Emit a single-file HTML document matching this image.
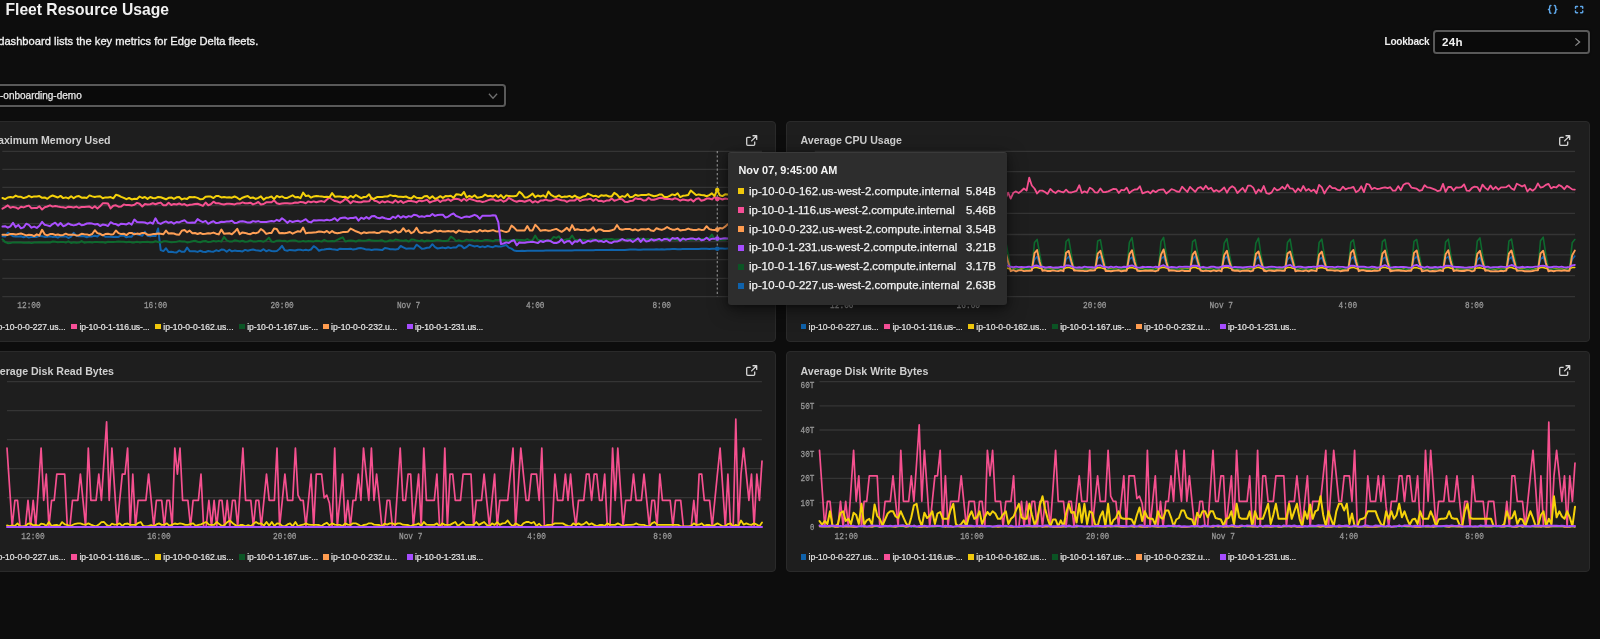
<!DOCTYPE html>
<html lang="en"><head><meta charset="utf-8"><title>Fleet Resource Usage</title>
<style>
html,body{margin:0;padding:0;background:#0d0d0d;}
body{width:1600px;height:639px;overflow:hidden;position:relative;font-family:"Liberation Sans",sans-serif;color:#fff;}
.abs{position:absolute;white-space:nowrap;}
.panel{position:absolute;background:#1e1e1e;border:1px solid #2a2a2a;border-radius:4px;box-sizing:border-box;}
.pt{position:absolute;white-space:nowrap;font-weight:bold;font-size:10.6px;color:#cfcfcf;line-height:12px;}
svg.main{position:absolute;left:0;top:0;}
.ax{font-family:"Liberation Mono",monospace;font-size:9.7px;fill:#989898;stroke:#989898;stroke-width:0.3px;}
.lg{position:absolute;height:10px;}
.li{-webkit-text-stroke:0.2px #e4e4e4;position:absolute;top:0;white-space:nowrap;font-size:8.6px;line-height:10px;color:#e4e4e4;padding-left:8px;}
.li i{position:absolute;left:0;top:2.3px;width:5.5px;height:5.5px;}
.ext{position:absolute;}
.sel{position:absolute;box-sizing:border-box;border:2px solid #595959;border-radius:3.5px;background:#0a0a0a;box-shadow:0 0 2px #060606;}
.tip{position:absolute;left:727.5px;top:151.5px;width:279.5px;height:153.5px;background:#2d2d2d;border-radius:3px;box-shadow:0 5px 18px rgba(0,0,0,.5),0 1px 5px rgba(0,0,0,.35);border-top:1px solid #3a3a3a;box-sizing:border-box;}
.tr{-webkit-text-stroke:0.25px #f2f2f2;position:absolute;left:10.5px;right:11px;height:14px;font-size:11.4px;letter-spacing:0.06px;line-height:14px;color:#f2f2f2;white-space:nowrap;}
.tr i{position:absolute;left:0;top:4.6px;width:6px;height:6px;}
.tn{position:absolute;left:11px;}
.tv{position:absolute;right:0;}
</style></head><body>
<div id="root" style="position:absolute;left:0;top:0;width:1600px;height:639px;overflow:hidden;will-change:transform;">
<div class="abs" style="left:5.5px;top:0px;font-size:15.65px;line-height:19px;font-weight:bold;color:#f1f1f1;">Fleet Resource Usage</div>
<div class="abs" style="left:-1.8px;top:33.5px;font-size:11.15px;line-height:14px;color:#f2f2f2;-webkit-text-stroke:0.3px #f2f2f2;">dashboard lists the key metrics for Edge Delta fleets.</div>
<svg class="abs" style="left:1540px;top:0px" width="50" height="20" viewBox="1540 0 50 20" fill="none" stroke="#5ea6e8" stroke-width="1.5" stroke-linecap="round" stroke-linejoin="round"><path d="M1550.9 5.6C1549.5 5.6 1549.7 6.8 1549.7 7.7S1549.2 9.4 1548.5 9.4C1549.2 9.4 1549.7 10.2 1549.7 11.1S1549.5 13.2 1550.9 13.2"/><path d="M1554.4 5.6C1555.8 5.6 1555.6 6.8 1555.6 7.7S1556.1 9.4 1556.8 9.4C1556.1 9.4 1555.6 10.2 1555.6 11.1S1555.8 13.2 1554.4 13.2"/><path d="M1575.5 8.2V7.2Q1575.5 6.6 1576.1 6.6H1577.5M1580.7 6.6H1582.1Q1582.7 6.6 1582.7 7.2V8.2M1582.7 11.1V12.1Q1582.7 12.7 1582.1 12.7H1580.7M1577.5 12.7H1576.1Q1575.5 12.7 1575.5 12.1V11.1"/></svg>
<div class="abs" style="left:1384.5px;top:36px;font-size:10.1px;line-height:12px;font-weight:bold;letter-spacing:-0.28px;color:#efefef;">Lookback</div>
<div class="sel" style="left:1433px;top:30px;width:157.2px;height:23.6px;"></div>
<div class="abs" style="left:1442px;top:34.7px;font-size:11.6px;line-height:13px;font-weight:bold;letter-spacing:0.3px;color:#efefef;">24h</div>
<svg class="abs" style="left:1574px;top:37px" width="8" height="10" viewBox="0 0 8 10" fill="none" stroke="#8c8c8c" stroke-width="1.25"><path d="M1.4 1.4L5.6 5.0L1.4 8.6"/></svg>
<div class="sel" style="left:-10px;top:84px;width:516px;height:23px;"></div>
<div class="abs" style="left:0px;top:89.5px;font-size:10px;line-height:12px;color:#e8e8e8;-webkit-text-stroke:0.25px #e8e8e8;">-onboarding-demo</div>
<svg class="abs" style="left:487px;top:92px" width="12" height="8" viewBox="0 0 12 8" fill="none" stroke="#707070" stroke-width="1.3"><path d="M1.9 1.8L6.0 6.2L10.1 1.8"/></svg>

<div class="panel" style="left:-27px;top:121px;width:803.1px;height:220.6px;"></div>
<div class="panel" style="left:785.9px;top:121px;width:804.3px;height:220.6px;"></div>
<div class="panel" style="left:-27px;top:351.4px;width:803.1px;height:220.6px;"></div>
<div class="panel" style="left:785.9px;top:351.4px;width:804.3px;height:220.6px;"></div>
<div class="pt" style="right:1489.5px;top:134px;">Maximum Memory Used</div>
<div class="pt" style="left:800.5px;top:134px;">Average CPU Usage</div>
<div class="pt" style="right:1486px;top:364.5px;">Average Disk Read Bytes</div>
<div class="pt" style="left:800.5px;top:364.5px;">Average Disk Write Bytes</div>
<svg class="ext" style="left:745.6px;top:134.6px" width="12" height="12" viewBox="0 0 12 12" fill="none" stroke="#d6d6d6" stroke-width="1.3" stroke-linejoin="round"><path d="M8.7 6.4v2.9a1 1 0 0 1-1 1H1.7a1 1 0 0 1-1-1V3.3a1 1 0 0 1 1-1h3"/><path d="M7 0.75h3.7v3.7M10.5 0.95L5.6 5.9" stroke-linecap="round"/></svg><svg class="ext" style="left:1558.6px;top:134.6px" width="12" height="12" viewBox="0 0 12 12" fill="none" stroke="#d6d6d6" stroke-width="1.3" stroke-linejoin="round"><path d="M8.7 6.4v2.9a1 1 0 0 1-1 1H1.7a1 1 0 0 1-1-1V3.3a1 1 0 0 1 1-1h3"/><path d="M7 0.75h3.7v3.7M10.5 0.95L5.6 5.9" stroke-linecap="round"/></svg><svg class="ext" style="left:745.6px;top:365.1px" width="12" height="12" viewBox="0 0 12 12" fill="none" stroke="#d6d6d6" stroke-width="1.3" stroke-linejoin="round"><path d="M8.7 6.4v2.9a1 1 0 0 1-1 1H1.7a1 1 0 0 1-1-1V3.3a1 1 0 0 1 1-1h3"/><path d="M7 0.75h3.7v3.7M10.5 0.95L5.6 5.9" stroke-linecap="round"/></svg><svg class="ext" style="left:1558.6px;top:365.1px" width="12" height="12" viewBox="0 0 12 12" fill="none" stroke="#d6d6d6" stroke-width="1.3" stroke-linejoin="round"><path d="M8.7 6.4v2.9a1 1 0 0 1-1 1H1.7a1 1 0 0 1-1-1V3.3a1 1 0 0 1 1-1h3"/><path d="M7 0.75h3.7v3.7M10.5 0.95L5.6 5.9" stroke-linecap="round"/></svg>
<svg class="main" width="1600" height="639" viewBox="0 0 1600 639"><line x1="2.3" x2="761.9" y1="151.4" y2="151.4" stroke="#353535" stroke-width="1.3"/><line x1="2.3" x2="761.9" y1="169.4" y2="169.4" stroke="#353535" stroke-width="1.3"/><line x1="2.3" x2="761.9" y1="187.4" y2="187.4" stroke="#353535" stroke-width="1.3"/><line x1="2.3" x2="761.9" y1="205.5" y2="205.5" stroke="#353535" stroke-width="1.3"/><line x1="2.3" x2="761.9" y1="223.6" y2="223.6" stroke="#353535" stroke-width="1.3"/><line x1="2.3" x2="761.9" y1="241.6" y2="241.6" stroke="#353535" stroke-width="1.3"/><line x1="2.3" x2="761.9" y1="259.7" y2="259.7" stroke="#353535" stroke-width="1.3"/><line x1="2.3" x2="761.9" y1="278.3" y2="278.3" stroke="#353535" stroke-width="1.3"/><line x1="2.3" x2="761.9" y1="296.7" y2="296.7" stroke="#353535" stroke-width="1.3"/>
<polyline points="2.5,236.2 5.1,236.6 7.8,232.7 10.4,234.4 13.0,236.2 15.7,236.5 18.3,236.6 21.0,236.2 23.6,237.2 26.2,236.3 28.9,237.6 31.5,236.9 34.1,236.9 36.8,236.9 39.4,235.9 42.1,236.3 44.7,236.9 47.3,236.8 50.0,236.3 52.6,236.9 55.2,236.5 57.9,237.7 60.5,236.2 63.2,236.5 65.8,236.4 68.4,238.0 71.1,236.7 73.7,232.9 76.3,235.7 79.0,236.2 81.6,236.1 84.3,236.2 86.9,237.2 89.5,236.4 92.2,236.4 94.8,235.8 97.4,236.5 100.1,234.1 102.7,234.9 105.3,236.7 108.0,236.8 110.6,236.8 113.3,237.0 115.9,236.7 118.5,236.9 121.2,235.4 123.8,235.7 126.4,237.3 129.1,236.6 131.7,236.7 134.4,233.1 137.0,234.3 139.6,235.1 142.3,235.7 144.9,231.7 147.5,235.7 150.2,236.4 152.8,235.7 155.5,236.1 158.1,228.5 160.7,250.1 163.4,251.1 166.0,248.3 168.6,252.1 171.3,251.7 173.9,252.2 176.6,252.6 179.2,250.4 181.8,251.8 184.5,251.7 187.1,247.6 189.7,251.2 192.4,251.3 195.0,251.3 197.6,251.9 200.3,250.7 202.9,251.7 205.6,252.0 208.2,251.0 210.8,251.5 213.5,251.7 216.1,250.3 218.7,251.1 221.4,249.6 224.0,249.7 226.7,251.8 229.3,249.7 231.9,251.3 234.6,250.6 237.2,251.1 239.8,251.0 242.5,251.4 245.1,249.9 247.8,250.7 250.4,250.0 253.0,249.5 255.7,250.2 258.3,250.5 260.9,250.9 263.6,249.2 266.2,251.2 268.9,250.1 271.5,251.0 274.1,251.3 276.8,251.0 279.4,249.0 282.0,245.8 284.7,250.1 287.3,250.7 289.9,249.9 292.6,250.2 295.2,250.5 297.9,249.7 300.5,249.8 303.1,250.4 305.8,249.7 308.4,250.4 311.0,249.5 313.7,246.2 316.3,247.9 319.0,250.8 321.6,249.8 324.2,249.6 326.9,249.0 329.5,248.7 332.1,249.3 334.8,249.6 337.4,250.0 340.1,248.7 342.7,249.1 345.3,249.0 348.0,249.0 350.6,248.7 353.2,249.6 355.9,249.0 358.5,248.2 361.2,248.1 363.8,248.8 366.4,249.6 369.1,249.6 371.7,249.9 374.3,249.5 377.0,249.6 379.6,249.8 382.2,250.1 384.9,248.0 387.5,248.4 390.2,249.3 392.8,249.2 395.4,249.4 398.1,249.0 400.7,246.0 403.3,247.3 406.0,248.7 408.6,248.4 411.3,248.5 413.9,248.7 416.5,244.7 419.2,246.5 421.8,248.7 424.4,248.4 427.1,247.8 429.7,247.4 432.4,244.2 435.0,247.1 437.6,248.5 440.3,248.0 442.9,247.6 445.5,248.2 448.2,247.3 450.8,248.1 453.5,247.4 456.1,247.6 458.7,245.3 461.4,245.7 464.0,248.3 466.6,247.0 469.3,244.7 471.9,245.6 474.6,246.5 477.2,245.9 479.8,247.2 482.5,246.4 485.1,247.2 487.7,246.0 490.4,246.8 493.0,247.2 495.6,245.9 498.3,246.5 500.9,246.6 503.6,245.9 506.2,245.0 508.8,247.6 511.5,248.6 514.1,250.5 516.7,250.9 519.4,250.9 522.0,250.8 524.7,250.9 527.3,250.8 529.9,250.8 532.6,250.8 535.2,250.8 537.8,250.8 540.5,250.8 543.1,250.7 545.8,250.6 548.4,250.6 551.0,250.6 553.7,250.5 556.3,250.4 558.9,250.5 561.6,250.6 564.2,250.4 566.9,250.4 569.5,250.4 572.1,250.4 574.8,250.3 577.4,250.2 580.0,250.2 582.7,250.2 585.3,250.2 587.9,250.3 590.6,250.2 593.2,250.2 595.9,250.0 598.5,249.9 601.1,250.1 603.8,250.1 606.4,250.0 609.0,250.0 611.7,249.8 614.3,249.9 617.0,250.0 619.6,249.9 622.2,249.9 624.9,249.9 627.5,249.7 630.1,249.6 632.8,249.6 635.4,249.6 638.1,249.7 640.7,249.7 643.3,249.6 646.0,249.6 648.6,249.6 651.2,249.5 653.9,249.4 656.5,249.3 659.2,249.4 661.8,249.3 664.4,249.4 667.1,249.3 669.7,249.2 672.3,249.1 675.0,249.1 677.6,249.2 680.2,249.2 682.9,249.0 685.5,249.0 688.2,249.0 690.8,249.0 693.4,249.0 696.1,248.9 698.7,248.9 701.3,248.8 704.0,248.8 706.6,248.8 709.3,248.9 711.9,248.8 714.5,248.8 717.2,248.7 719.8,248.6 722.4,248.6 725.1,248.7 727.7,248.6" fill="none" stroke="#1064ad" stroke-width="2.0" stroke-linejoin="round" stroke-linecap="round"/>
<polyline points="2.5,208.7 5.1,207.2 7.8,205.4 10.4,207.8 13.0,206.9 15.7,207.4 18.3,208.8 21.0,206.7 23.6,207.4 26.2,206.3 28.9,205.6 31.5,208.2 34.1,208.1 36.8,208.1 39.4,206.3 42.1,209.5 44.7,207.3 47.3,206.5 50.0,205.3 52.6,206.6 55.2,206.0 57.9,206.6 60.5,207.0 63.2,207.3 65.8,207.9 68.4,206.7 71.1,207.1 73.7,207.5 76.3,206.6 79.0,207.8 81.6,207.0 84.3,207.0 86.9,206.8 89.5,206.6 92.2,208.2 94.8,206.3 97.4,208.6 100.1,206.3 102.7,203.3 105.3,203.2 108.0,203.6 110.6,208.4 113.3,205.7 115.9,205.3 118.5,206.7 121.2,206.6 123.8,204.4 126.4,205.1 129.1,205.0 131.7,205.4 134.4,204.8 137.0,202.9 139.6,203.8 142.3,206.5 144.9,204.1 147.5,204.5 150.2,204.2 152.8,203.3 155.5,204.2 158.1,203.2 160.7,202.6 163.4,205.3 166.0,205.2 168.6,202.8 171.3,205.0 173.9,203.9 176.6,204.5 179.2,203.5 181.8,204.7 184.5,204.1 187.1,205.6 189.7,204.7 192.4,204.5 195.0,204.1 197.6,203.7 200.3,204.8 202.9,205.9 205.6,202.5 208.2,205.2 210.8,204.2 213.5,201.7 216.1,203.3 218.7,203.3 221.4,203.9 224.0,204.4 226.7,203.8 229.3,203.8 231.9,204.0 234.6,204.4 237.2,203.4 239.8,203.6 242.5,202.4 245.1,203.2 247.8,203.3 250.4,202.7 253.0,204.4 255.7,203.4 258.3,202.0 260.9,204.5 263.6,204.0 266.2,202.3 268.9,202.2 271.5,202.3 274.1,200.4 276.8,203.2 279.4,204.0 282.0,203.5 284.7,203.2 287.3,203.3 289.9,203.4 292.6,203.2 295.2,202.5 297.9,202.7 300.5,201.9 303.1,202.2 305.8,203.2 308.4,201.4 311.0,202.2 313.7,201.4 316.3,202.3 319.0,201.5 321.6,201.1 324.2,201.9 326.9,199.5 329.5,197.5 332.1,199.5 334.8,201.1 337.4,201.5 340.1,202.7 342.7,201.2 345.3,198.7 348.0,200.6 350.6,203.3 353.2,201.1 355.9,201.8 358.5,202.3 361.2,202.3 363.8,201.3 366.4,201.5 369.1,201.3 371.7,197.8 374.3,200.7 377.0,201.3 379.6,202.9 382.2,201.3 384.9,202.4 387.5,201.2 390.2,202.1 392.8,202.7 395.4,200.3 398.1,202.5 400.7,200.9 403.3,202.9 406.0,201.7 408.6,200.8 411.3,201.0 413.9,201.4 416.5,202.4 419.2,200.5 421.8,201.2 424.4,200.6 427.1,199.8 429.7,202.5 432.4,201.4 435.0,200.7 437.6,199.7 440.3,202.0 442.9,200.2 445.5,200.5 448.2,199.2 450.8,200.9 453.5,199.2 456.1,198.8 458.7,199.2 461.4,200.9 464.0,198.8 466.6,200.7 469.3,198.8 471.9,199.5 474.6,200.4 477.2,201.3 479.8,201.1 482.5,202.0 485.1,201.4 487.7,200.4 490.4,199.5 493.0,199.2 495.6,200.7 498.3,200.8 500.9,199.8 503.6,201.7 506.2,200.5 508.8,197.8 511.5,199.4 514.1,200.9 516.7,201.8 519.4,200.7 522.0,201.0 524.7,201.8 527.3,200.8 529.9,200.0 532.6,202.5 535.2,201.2 537.8,202.4 540.5,200.6 543.1,200.5 545.8,199.5 548.4,200.6 551.0,200.8 553.7,199.9 556.3,198.8 558.9,199.6 561.6,200.2 564.2,200.4 566.9,201.9 569.5,200.6 572.1,200.4 574.8,200.4 577.4,198.4 580.0,201.1 582.7,199.9 585.3,199.5 587.9,199.4 590.6,198.7 593.2,200.8 595.9,199.0 598.5,201.0 601.1,200.7 603.8,201.7 606.4,200.6 609.0,200.6 611.7,198.6 614.3,200.8 617.0,199.9 619.6,198.9 622.2,199.2 624.9,201.7 627.5,202.0 630.1,201.0 632.8,200.7 635.4,198.2 638.1,199.0 640.7,198.8 643.3,200.4 646.0,200.3 648.6,197.8 651.2,199.8 653.9,199.7 656.5,199.0 659.2,198.0 661.8,197.8 664.4,198.7 667.1,198.9 669.7,199.1 672.3,199.5 675.0,198.2 677.6,199.1 680.2,200.7 682.9,199.5 685.5,199.9 688.2,200.5 690.8,199.3 693.4,201.5 696.1,199.0 698.7,198.2 701.3,200.7 704.0,200.0 706.6,198.6 709.3,198.5 711.9,199.4 714.5,197.1 717.2,198.9 719.8,198.3 722.4,199.5 725.1,198.5 727.7,198.9" fill="none" stroke="#f5508f" stroke-width="2.0" stroke-linejoin="round" stroke-linecap="round"/>
<polyline points="2.5,198.0 5.1,199.1 7.8,197.5 10.4,197.0 13.0,197.5 15.7,195.6 18.3,196.8 21.0,196.8 23.6,198.1 26.2,197.3 28.9,195.8 31.5,197.2 34.1,196.4 36.8,196.6 39.4,196.1 42.1,197.8 44.7,197.4 47.3,198.8 50.0,196.7 52.6,195.5 55.2,196.5 57.9,197.5 60.5,195.9 63.2,198.1 65.8,197.4 68.4,198.4 71.1,196.2 73.7,198.2 76.3,196.5 79.0,196.1 81.6,197.7 84.3,197.4 86.9,197.9 89.5,195.4 92.2,196.4 94.8,197.0 97.4,196.4 100.1,196.2 102.7,198.2 105.3,197.4 108.0,197.6 110.6,197.1 113.3,198.3 115.9,194.8 118.5,195.5 121.2,196.8 123.8,197.9 126.4,199.2 129.1,198.0 131.7,199.4 134.4,198.8 137.0,198.9 139.6,196.5 142.3,198.0 144.9,197.0 147.5,198.9 150.2,197.0 152.8,198.0 155.5,198.2 158.1,197.0 160.7,197.3 163.4,198.3 166.0,199.3 168.6,197.8 171.3,197.4 173.9,198.8 176.6,197.3 179.2,197.0 181.8,199.4 184.5,198.4 187.1,198.9 189.7,196.9 192.4,197.3 195.0,197.1 197.6,197.9 200.3,199.3 202.9,199.1 205.6,196.7 208.2,196.4 210.8,196.6 213.5,198.1 216.1,195.9 218.7,196.1 221.4,197.4 224.0,197.0 226.7,197.4 229.3,197.3 231.9,197.7 234.6,196.5 237.2,197.7 239.8,199.5 242.5,197.7 245.1,196.7 247.8,196.1 250.4,198.0 253.0,197.5 255.7,198.9 258.3,197.8 260.9,196.3 263.6,199.7 266.2,197.8 268.9,197.4 271.5,196.5 274.1,199.1 276.8,195.9 279.4,197.2 282.0,196.4 284.7,198.0 287.3,197.9 289.9,196.6 292.6,195.3 295.2,197.3 297.9,197.0 300.5,198.1 303.1,192.6 305.8,196.1 308.4,195.5 311.0,197.6 313.7,196.4 316.3,195.9 319.0,196.3 321.6,196.4 324.2,197.0 326.9,196.7 329.5,197.3 332.1,193.1 334.8,196.7 337.4,196.5 340.1,196.5 342.7,196.9 345.3,196.8 348.0,198.1 350.6,195.9 353.2,197.5 355.9,195.0 358.5,196.6 361.2,198.2 363.8,197.0 366.4,196.7 369.1,194.3 371.7,198.8 374.3,198.7 377.0,197.1 379.6,197.1 382.2,196.9 384.9,196.4 387.5,196.5 390.2,195.1 392.8,195.9 395.4,195.8 398.1,196.8 400.7,196.8 403.3,197.0 406.0,196.5 408.6,197.8 411.3,198.5 413.9,196.0 416.5,197.8 419.2,197.9 421.8,198.2 424.4,196.2 427.1,196.1 429.7,198.4 432.4,196.2 435.0,198.9 437.6,197.8 440.3,196.2 442.9,197.9 445.5,196.1 448.2,196.3 450.8,195.7 453.5,197.8 456.1,194.3 458.7,194.4 461.4,195.2 464.0,192.0 466.6,197.5 469.3,195.8 471.9,197.2 474.6,195.3 477.2,197.7 479.8,197.3 482.5,196.7 485.1,194.6 487.7,196.2 490.4,195.7 493.0,196.7 495.6,195.0 498.3,197.2 500.9,195.1 503.6,198.2 506.2,195.4 508.8,196.1 511.5,196.3 514.1,196.3 516.7,195.7 519.4,191.8 522.0,193.9 524.7,197.5 527.3,197.3 529.9,195.7 532.6,193.6 535.2,197.1 537.8,195.5 540.5,196.5 543.1,195.3 545.8,197.3 548.4,191.6 551.0,194.9 553.7,196.4 556.3,196.9 558.9,195.4 561.6,197.3 564.2,196.6 566.9,196.8 569.5,195.9 572.1,197.4 574.8,195.6 577.4,197.3 580.0,198.0 582.7,196.6 585.3,196.1 587.9,193.6 590.6,194.8 593.2,196.2 595.9,195.8 598.5,197.1 601.1,195.2 603.8,195.8 606.4,195.3 609.0,196.5 611.7,196.4 614.3,192.9 617.0,194.6 619.6,197.7 622.2,196.1 624.9,196.9 627.5,194.1 630.1,197.3 632.8,196.8 635.4,194.7 638.1,195.7 640.7,195.1 643.3,195.0 646.0,195.1 648.6,194.2 651.2,195.3 653.9,196.3 656.5,195.8 659.2,194.6 661.8,194.4 664.4,197.1 667.1,197.1 669.7,195.9 672.3,194.4 675.0,195.3 677.6,193.3 680.2,197.2 682.9,195.8 685.5,195.6 688.2,195.0 690.8,190.5 693.4,192.8 696.1,195.1 698.7,194.4 701.3,194.9 704.0,195.2 706.6,196.2 709.3,195.1 711.9,193.4 714.5,196.0 717.2,190.0 719.8,195.2 722.4,196.1 725.1,194.3 727.7,194.5" fill="none" stroke="#f5d20a" stroke-width="2.0" stroke-linejoin="round" stroke-linecap="round"/>
<polyline points="2.5,239.4 5.1,242.0 7.8,243.2 10.4,243.1 13.0,242.4 15.7,242.4 18.3,242.5 21.0,242.6 23.6,242.7 26.2,242.7 28.9,242.5 31.5,243.1 34.1,242.5 36.8,242.4 39.4,242.2 42.1,242.6 44.7,242.5 47.3,242.3 50.0,242.6 52.6,241.5 55.2,241.8 57.9,242.3 60.5,242.0 63.2,241.9 65.8,242.6 68.4,241.3 71.1,243.0 73.7,242.3 76.3,242.7 79.0,242.6 81.6,241.1 84.3,242.7 86.9,242.3 89.5,242.1 92.2,242.6 94.8,241.9 97.4,242.1 100.1,242.3 102.7,242.1 105.3,242.7 108.0,241.8 110.6,242.1 113.3,241.9 115.9,241.8 118.5,241.6 121.2,241.7 123.8,241.7 126.4,242.3 129.1,241.8 131.7,242.4 134.4,242.4 137.0,241.8 139.6,242.4 142.3,242.0 144.9,242.0 147.5,241.7 150.2,242.2 152.8,242.2 155.5,241.2 158.1,242.0 160.7,242.5 163.4,241.3 166.0,241.3 168.6,241.8 171.3,242.3 173.9,242.1 176.6,241.7 179.2,241.1 181.8,241.4 184.5,241.4 187.1,242.4 189.7,242.0 192.4,241.2 195.0,240.8 197.6,241.8 200.3,242.3 202.9,241.3 205.6,241.0 208.2,242.1 210.8,241.7 213.5,240.9 216.1,241.5 218.7,240.9 221.4,241.6 224.0,236.9 226.7,240.3 229.3,241.4 231.9,241.6 234.6,240.3 237.2,240.8 239.8,241.5 242.5,240.8 245.1,241.7 247.8,241.5 250.4,240.3 253.0,241.4 255.7,241.6 258.3,241.0 260.9,241.1 263.6,241.7 266.2,240.4 268.9,237.6 271.5,241.6 274.1,241.9 276.8,240.7 279.4,240.5 282.0,241.0 284.7,240.7 287.3,241.6 289.9,240.8 292.6,240.5 295.2,240.5 297.9,241.4 300.5,241.6 303.1,240.9 305.8,241.5 308.4,241.0 311.0,241.2 313.7,241.4 316.3,240.7 319.0,240.9 321.6,241.6 324.2,239.8 326.9,241.2 329.5,241.3 332.1,241.0 334.8,241.2 337.4,239.9 340.1,238.5 342.7,237.3 345.3,241.6 348.0,240.7 350.6,240.5 353.2,240.8 355.9,241.5 358.5,240.3 361.2,240.6 363.8,240.8 366.4,240.5 369.1,239.8 371.7,240.6 374.3,240.8 377.0,240.8 379.6,240.6 382.2,240.3 384.9,241.6 387.5,241.3 390.2,240.2 392.8,240.8 395.4,239.6 398.1,240.0 400.7,240.6 403.3,240.8 406.0,240.2 408.6,241.6 411.3,239.6 413.9,239.8 416.5,240.6 419.2,241.1 421.8,240.2 424.4,241.5 427.1,240.5 429.7,240.8 432.4,240.9 435.0,240.4 437.6,240.0 440.3,240.4 442.9,241.1 445.5,241.1 448.2,240.6 450.8,236.7 453.5,238.4 456.1,241.1 458.7,240.3 461.4,241.3 464.0,240.9 466.6,239.6 469.3,240.3 471.9,239.9 474.6,240.9 477.2,240.2 479.8,240.9 482.5,240.9 485.1,239.9 487.7,240.0 490.4,240.5 493.0,241.3 495.6,239.9 498.3,240.1 500.9,239.9 503.6,239.7 506.2,240.5 508.8,240.4 511.5,240.1 514.1,240.0 516.7,239.7 519.4,240.1 522.0,240.1 524.7,240.3 527.3,239.2 529.9,240.7 532.6,240.2 535.2,235.6 537.8,239.7 540.5,240.4 543.1,239.9 545.8,240.9 548.4,240.0 551.0,240.1 553.7,236.9 556.3,237.9 558.9,236.4 561.6,240.3 564.2,240.1 566.9,239.2 569.5,239.1 572.1,235.5 574.8,239.7 577.4,239.9 580.0,240.1 582.7,239.8 585.3,239.9 587.9,240.7 590.6,239.5 593.2,239.2 595.9,239.6 598.5,239.8 601.1,240.3 603.8,239.3 606.4,239.2 609.0,239.2 611.7,239.0 614.3,239.8 617.0,239.5 619.6,239.4 622.2,239.4 624.9,240.1 627.5,239.1 630.1,239.3 632.8,239.2 635.4,239.6 638.1,239.2 640.7,238.7 643.3,238.8 646.0,239.3 648.6,239.0 651.2,240.3 653.9,238.9 656.5,240.1 659.2,239.7 661.8,239.9 664.4,239.4 667.1,238.3 669.7,239.0 672.3,239.5 675.0,239.5 677.6,240.0 680.2,239.0 682.9,239.7 685.5,239.2 688.2,239.2 690.8,239.8 693.4,239.5 696.1,239.6 698.7,239.5 701.3,239.0 704.0,239.1 706.6,238.3 709.3,238.2 711.9,234.6 714.5,239.3 717.2,239.3 719.8,239.7 722.4,239.4 725.1,239.7 727.7,238.8" fill="none" stroke="#0e6a2e" stroke-width="2.0" stroke-linejoin="round" stroke-linecap="round"/>
<polyline points="2.5,234.8 5.1,234.7 7.8,234.9 10.4,234.0 13.0,234.0 15.7,234.6 18.3,234.0 21.0,233.5 23.6,234.4 26.2,235.4 28.9,234.7 31.5,234.9 34.1,236.1 36.8,234.3 39.4,235.5 42.1,229.8 44.7,234.3 47.3,235.4 50.0,234.1 52.6,234.0 55.2,234.9 57.9,234.5 60.5,235.3 63.2,234.9 65.8,233.7 68.4,234.8 71.1,234.7 73.7,234.6 76.3,235.4 79.0,235.2 81.6,233.8 84.3,234.2 86.9,234.4 89.5,235.2 92.2,234.0 94.8,230.2 97.4,233.1 100.1,233.8 102.7,235.3 105.3,234.1 108.0,233.8 110.6,234.4 113.3,234.2 115.9,230.5 118.5,233.1 121.2,234.1 123.8,233.7 126.4,235.1 129.1,233.0 131.7,233.0 134.4,234.3 137.0,233.6 139.6,234.0 142.3,232.9 144.9,233.1 147.5,234.7 150.2,234.8 152.8,234.1 155.5,234.0 158.1,233.5 160.7,233.8 163.4,234.3 166.0,230.6 168.6,233.6 171.3,233.2 173.9,233.5 176.6,234.6 179.2,234.8 181.8,230.8 184.5,230.0 187.1,232.2 189.7,230.6 192.4,233.3 195.0,233.0 197.6,234.0 200.3,233.0 202.9,234.1 205.6,233.8 208.2,233.3 210.8,233.4 213.5,232.6 216.1,233.7 218.7,234.4 221.4,229.6 224.0,233.8 226.7,233.5 229.3,233.3 231.9,234.2 234.6,231.8 237.2,228.8 239.8,234.2 242.5,232.4 245.1,232.9 247.8,233.7 250.4,234.2 253.0,232.8 255.7,233.2 258.3,232.4 260.9,229.0 263.6,230.8 266.2,233.9 268.9,233.1 271.5,233.1 274.1,228.6 276.8,229.1 279.4,233.3 282.0,233.1 284.7,233.2 287.3,232.8 289.9,232.0 292.6,233.7 295.2,232.4 297.9,231.3 300.5,231.8 303.1,227.5 305.8,233.4 308.4,232.7 311.0,232.8 313.7,232.5 316.3,232.2 319.0,231.5 321.6,231.7 324.2,232.4 326.9,231.0 329.5,233.0 332.1,231.1 334.8,232.8 337.4,233.2 340.1,232.8 342.7,232.1 345.3,231.9 348.0,231.7 350.6,228.6 353.2,229.9 355.9,231.3 358.5,232.2 361.2,233.7 363.8,232.3 366.4,233.0 369.1,232.4 371.7,232.4 374.3,232.3 377.0,233.1 379.6,232.7 382.2,231.2 384.9,231.5 387.5,231.4 390.2,232.9 392.8,232.0 395.4,230.6 398.1,232.6 400.7,231.7 403.3,228.2 406.0,231.6 408.6,230.3 411.3,233.2 413.9,231.8 416.5,227.7 419.2,232.3 421.8,233.1 424.4,232.1 427.1,232.6 429.7,232.7 432.4,231.7 435.0,230.5 437.6,231.5 440.3,230.8 442.9,231.6 445.5,231.4 448.2,231.1 450.8,231.5 453.5,231.1 456.1,232.8 458.7,230.4 461.4,231.2 464.0,231.8 466.6,231.5 469.3,232.3 471.9,231.6 474.6,231.1 477.2,232.0 479.8,230.0 482.5,231.3 485.1,230.5 487.7,231.3 490.4,230.7 493.0,230.1 495.6,231.2 498.3,231.4 500.9,230.4 503.6,231.4 506.2,232.1 508.8,231.1 511.5,225.6 514.1,227.6 516.7,230.4 519.4,230.6 522.0,230.4 524.7,230.4 527.3,226.0 529.9,230.6 532.6,230.4 535.2,224.8 537.8,227.4 540.5,230.8 543.1,230.3 545.8,230.1 548.4,230.7 551.0,230.4 553.7,229.6 556.3,228.9 558.9,230.4 561.6,231.8 564.2,230.1 566.9,227.9 569.5,230.8 572.1,225.1 574.8,230.0 577.4,229.2 580.0,229.9 582.7,230.1 585.3,229.5 587.9,230.8 590.6,230.0 593.2,227.3 595.9,231.6 598.5,229.5 601.1,229.6 603.8,231.0 606.4,230.9 609.0,231.0 611.7,230.3 614.3,229.4 617.0,225.0 619.6,229.0 622.2,229.8 624.9,229.1 627.5,229.0 630.1,229.1 632.8,230.3 635.4,229.3 638.1,230.6 640.7,229.3 643.3,229.3 646.0,229.5 648.6,228.8 651.2,230.6 653.9,230.9 656.5,228.3 659.2,229.3 661.8,229.9 664.4,228.8 667.1,227.0 669.7,228.6 672.3,229.7 675.0,229.7 677.6,228.6 680.2,230.4 682.9,230.0 685.5,229.7 688.2,228.6 690.8,229.6 693.4,229.9 696.1,230.1 698.7,229.3 701.3,229.9 704.0,229.7 706.6,226.2 709.3,229.1 711.9,229.7 714.5,229.9 717.2,229.6 719.8,228.0 722.4,228.5 725.1,226.7 727.7,224.2" fill="none" stroke="#ff9f55" stroke-width="2.0" stroke-linejoin="round" stroke-linecap="round"/>
<polyline points="2.5,226.6 5.1,226.2 7.8,227.7 10.4,226.3 13.0,222.8 15.7,227.1 18.3,224.9 21.0,228.3 23.6,227.4 26.2,223.7 28.9,224.9 31.5,227.7 34.1,226.6 36.8,227.9 39.4,225.8 42.1,221.9 44.7,224.8 47.3,225.4 50.0,226.3 52.6,224.1 55.2,222.7 57.9,225.7 60.5,223.0 63.2,226.2 65.8,225.3 68.4,223.4 71.1,224.8 73.7,225.4 76.3,224.8 79.0,223.4 81.6,225.2 84.3,224.7 86.9,223.5 89.5,223.3 92.2,223.6 94.8,224.4 97.4,223.9 100.1,226.0 102.7,224.6 105.3,224.9 108.0,226.0 110.6,222.2 113.3,223.7 115.9,224.1 118.5,225.5 121.2,223.7 123.8,223.9 126.4,224.4 129.1,223.0 131.7,224.6 134.4,219.6 137.0,222.0 139.6,222.3 142.3,222.2 144.9,222.5 147.5,223.7 150.2,222.3 152.8,223.7 155.5,218.3 158.1,222.9 160.7,223.9 163.4,222.4 166.0,221.4 168.6,222.8 171.3,222.0 173.9,223.7 176.6,222.0 179.2,222.4 181.8,221.2 184.5,220.3 187.1,222.5 189.7,222.8 192.4,222.6 195.0,222.7 197.6,219.1 200.3,220.8 202.9,222.2 205.6,220.9 208.2,223.8 210.8,222.3 213.5,221.2 216.1,223.1 218.7,222.8 221.4,221.7 224.0,222.0 226.7,221.6 229.3,221.5 231.9,220.8 234.6,223.0 237.2,222.7 239.8,221.5 242.5,221.2 245.1,221.8 247.8,222.6 250.4,222.5 253.0,221.1 255.7,221.8 258.3,221.1 260.9,222.1 263.6,222.0 266.2,222.0 268.9,221.5 271.5,221.1 274.1,221.5 276.8,219.8 279.4,221.0 282.0,218.2 284.7,220.3 287.3,222.9 289.9,220.8 292.6,222.0 295.2,221.3 297.9,220.8 300.5,221.8 303.1,220.7 305.8,219.2 308.4,221.8 311.0,222.4 313.7,220.2 316.3,220.6 319.0,220.2 321.6,220.3 324.2,220.5 326.9,219.8 329.5,220.4 332.1,219.7 334.8,218.2 337.4,220.7 340.1,218.2 342.7,217.7 345.3,217.6 348.0,218.8 350.6,217.9 353.2,218.0 355.9,217.2 358.5,220.7 361.2,217.7 363.8,218.9 366.4,217.1 369.1,218.8 371.7,216.2 374.3,215.9 377.0,217.6 379.6,218.2 382.2,217.2 384.9,218.2 387.5,218.9 390.2,219.0 392.8,216.7 395.4,217.9 398.1,215.6 400.7,217.8 403.3,216.2 406.0,217.5 408.6,216.1 411.3,216.8 413.9,214.8 416.5,215.2 419.2,216.9 421.8,216.3 424.4,216.9 427.1,215.7 429.7,216.1 432.4,214.0 435.0,215.9 437.6,215.0 440.3,214.7 442.9,214.8 445.5,217.6 448.2,216.6 450.8,214.7 453.5,213.5 456.1,216.0 458.7,216.9 461.4,218.1 464.0,217.1 466.6,216.6 469.3,217.0 471.9,216.0 474.6,214.8 477.2,216.0 479.8,218.7 482.5,215.7 485.1,215.8 487.7,215.7 490.4,215.7 493.0,215.2 495.6,215.4 498.3,222.1 500.9,243.9 503.6,243.5 506.2,242.4 508.8,243.0 511.5,241.0 514.1,240.3 516.7,245.3 519.4,242.4 522.0,242.7 524.7,242.8 527.3,242.3 529.9,242.1 532.6,241.7 535.2,242.4 537.8,243.1 540.5,241.0 543.1,242.0 545.8,240.8 548.4,240.6 551.0,241.3 553.7,243.0 556.3,243.1 558.9,242.0 561.6,239.3 564.2,243.0 566.9,241.3 569.5,240.9 572.1,244.1 574.8,241.2 577.4,241.8 580.0,239.6 582.7,243.3 585.3,242.5 587.9,240.8 590.6,241.6 593.2,240.4 595.9,240.0 598.5,241.5 601.1,241.0 603.8,242.1 606.4,240.7 609.0,242.5 611.7,242.9 614.3,241.4 617.0,241.6 619.6,240.5 622.2,239.1 624.9,240.2 627.5,240.8 630.1,240.1 632.8,242.0 635.4,240.2 638.1,238.4 640.7,241.9 643.3,238.8 646.0,241.4 648.6,241.1 651.2,239.2 653.9,240.5 656.5,239.7 659.2,238.9 661.8,240.5 664.4,238.9 667.1,239.2 669.7,240.7 672.3,238.1 675.0,238.7 677.6,238.0 680.2,240.8 682.9,238.4 685.5,239.7 688.2,238.9 690.8,238.6 693.4,238.6 696.1,239.5 698.7,238.3 701.3,240.3 704.0,239.8 706.6,237.8 709.3,240.1 711.9,238.7 714.5,238.8 717.2,238.6 719.8,238.9 722.4,238.6 725.1,238.2 727.7,238.6" fill="none" stroke="#a94fff" stroke-width="2.0" stroke-linejoin="round" stroke-linecap="round"/>
<line x1="717.3" x2="717.3" y1="151" y2="296.5" stroke="#909090" stroke-width="1.2" stroke-dasharray="2.2,2.2"/>
<circle cx="717.3" cy="248.7" r="2.3" fill="#1064ad"/>
<circle cx="717.3" cy="239.3" r="2.3" fill="#0e6a2e"/>
<circle cx="717.3" cy="238.6" r="2.3" fill="#a94fff"/>
<circle cx="717.3" cy="229.6" r="2.3" fill="#ff9f55"/>
<circle cx="717.3" cy="198.9" r="2.3" fill="#f5508f"/>
<circle cx="717.3" cy="190.0" r="2.3" fill="#f5d20a"/>
<text x="17.3" y="308.4" class="ax" textLength="23.4" lengthAdjust="spacingAndGlyphs">12:00</text><text x="143.9" y="308.4" class="ax" textLength="23.4" lengthAdjust="spacingAndGlyphs">16:00</text><text x="270.4" y="308.4" class="ax" textLength="23.4" lengthAdjust="spacingAndGlyphs">20:00</text><text x="396.9" y="308.4" class="ax" textLength="23.4" lengthAdjust="spacingAndGlyphs">Nov 7</text><text x="525.9" y="308.4" class="ax" textLength="18.6" lengthAdjust="spacingAndGlyphs">4:00</text><text x="652.4" y="308.4" class="ax" textLength="18.6" lengthAdjust="spacingAndGlyphs">8:00</text>
<line x1="814.7" x2="1575.0" y1="151.4" y2="151.4" stroke="#353535" stroke-width="1.3"/><line x1="814.7" x2="1575.0" y1="171.6" y2="171.6" stroke="#353535" stroke-width="1.3"/><line x1="814.7" x2="1575.0" y1="192.6" y2="192.6" stroke="#353535" stroke-width="1.3"/><line x1="814.7" x2="1575.0" y1="213.4" y2="213.4" stroke="#353535" stroke-width="1.3"/><line x1="814.7" x2="1575.0" y1="234.5" y2="234.5" stroke="#353535" stroke-width="1.3"/><line x1="814.7" x2="1575.0" y1="254.8" y2="254.8" stroke="#353535" stroke-width="1.3"/><line x1="814.7" x2="1575.0" y1="275.6" y2="275.6" stroke="#353535" stroke-width="1.3"/><line x1="814.7" x2="1575.0" y1="296.7" y2="296.7" stroke="#353535" stroke-width="1.3"/>
<polyline points="815.7,255.9 818.3,264.0 821.0,269.7 823.6,269.8 826.2,269.6 828.9,269.5 831.5,269.4 834.2,269.5 836.8,269.4 839.4,269.4 842.1,269.8 844.7,259.3 847.3,257.4 850.0,264.2 852.6,269.8 855.2,270.0 857.9,269.8 860.5,270.0 863.1,269.9 865.8,269.8 868.4,269.8 871.1,269.3 873.7,269.4 876.3,260.2 879.0,256.7 881.6,264.3 884.2,269.7 886.9,270.0 889.5,269.4 892.1,269.2 894.8,269.3 897.4,269.5 900.0,269.9 902.7,269.8 905.3,269.6 908.0,259.5 910.6,257.5 913.2,264.7 915.9,269.8 918.5,269.6 921.1,269.9 923.8,269.3 926.4,269.3 929.0,269.7 931.7,269.6 934.3,269.4 936.9,269.4 939.6,260.2 942.2,256.9 944.9,263.9 947.5,269.5 950.1,269.8 952.8,269.9 955.4,269.3 958.0,269.2 960.7,269.4 963.3,269.7 965.9,269.5 968.6,269.2 971.2,259.3 973.8,256.5 976.5,264.1 979.1,269.5 981.8,269.7 984.4,269.9 987.0,269.6 989.7,269.7 992.3,269.4 994.9,269.4 997.6,269.9 1000.2,269.5 1002.8,259.9 1005.5,257.1 1008.1,264.3 1010.7,269.8 1013.4,269.6 1016.0,269.3 1018.7,269.8 1021.3,269.2 1023.9,269.6 1026.6,269.5 1029.2,269.7 1031.8,269.8 1034.5,259.8 1037.1,256.6 1039.7,264.8 1042.4,269.3 1045.0,269.4 1047.6,270.0 1050.3,269.4 1052.9,269.5 1055.6,269.8 1058.2,269.9 1060.8,269.7 1063.5,269.8 1066.1,259.6 1068.7,256.5 1071.4,264.1 1074.0,269.9 1076.6,269.4 1079.3,269.7 1081.9,269.9 1084.5,269.7 1087.2,269.9 1089.8,269.4 1092.5,269.3 1095.1,269.2 1097.7,258.8 1100.4,256.4 1103.0,264.7 1105.6,269.6 1108.3,269.3 1110.9,269.8 1113.5,269.9 1116.2,269.9 1118.8,269.2 1121.4,269.9 1124.1,269.6 1126.7,269.9 1129.4,259.5 1132.0,257.0 1134.6,264.1 1137.3,269.4 1139.9,269.5 1142.5,269.2 1145.2,269.8 1147.8,269.2 1150.4,269.9 1153.1,269.8 1155.7,269.6 1158.3,269.3 1161.0,259.0 1163.6,256.6 1166.3,264.0 1168.9,269.3 1171.5,269.8 1174.2,269.9 1176.8,269.9 1179.4,269.3 1182.1,269.5 1184.7,269.4 1187.3,269.8 1190.0,269.3 1192.6,259.7 1195.2,256.1 1197.9,264.2 1200.5,269.7 1203.2,269.6 1205.8,269.6 1208.4,269.5 1211.1,269.7 1213.7,269.7 1216.3,269.9 1219.0,269.8 1221.6,269.8 1224.2,259.2 1226.9,256.2 1229.5,264.4 1232.2,269.9 1234.8,269.3 1237.4,270.0 1240.1,269.6 1242.7,269.8 1245.3,269.4 1248.0,269.4 1250.6,269.5 1253.2,269.5 1255.9,259.8 1258.5,256.4 1261.1,264.2 1263.8,270.0 1266.4,269.8 1269.1,269.4 1271.7,269.4 1274.3,269.5 1277.0,269.2 1279.6,269.4 1282.2,269.9 1284.9,269.9 1287.5,259.8 1290.1,256.8 1292.8,264.1 1295.4,269.9 1298.0,269.5 1300.7,269.7 1303.3,269.5 1306.0,269.6 1308.6,270.0 1311.2,269.3 1313.9,269.6 1316.5,269.7 1319.1,259.7 1321.8,257.3 1324.4,264.5 1327.0,269.4 1329.7,269.4 1332.3,269.9 1334.9,269.2 1337.6,269.4 1340.2,269.8 1342.9,270.0 1345.5,269.3 1348.1,269.6 1350.8,259.4 1353.4,256.7 1356.0,264.2 1358.7,269.8 1361.3,269.4 1363.9,269.4 1366.6,270.0 1369.2,269.7 1371.8,269.7 1374.5,269.7 1377.1,269.7 1379.8,269.8 1382.4,259.3 1385.0,257.0 1387.7,264.0 1390.3,269.6 1392.9,270.0 1395.6,269.8 1398.2,269.4 1400.8,269.8 1403.5,269.3 1406.1,269.3 1408.7,269.4 1411.4,269.5 1414.0,259.2 1416.7,256.2 1419.3,263.9 1421.9,269.2 1424.6,269.9 1427.2,269.4 1429.8,269.9 1432.5,269.8 1435.1,269.7 1437.7,269.4 1440.4,269.2 1443.0,269.4 1445.6,258.7 1448.3,256.7 1450.9,263.9 1453.6,269.3 1456.2,270.0 1458.8,269.5 1461.5,269.7 1464.1,269.7 1466.7,269.4 1469.4,269.3 1472.0,269.2 1474.6,269.9 1477.3,260.2 1479.9,257.2 1482.5,264.7 1485.2,269.5 1487.8,269.6 1490.5,269.3 1493.1,269.4 1495.7,269.8 1498.4,269.4 1501.0,269.5 1503.6,269.8 1506.3,269.4 1508.9,259.5 1511.5,256.9 1514.2,264.1 1516.8,269.2 1519.4,269.7 1522.1,269.9 1524.7,269.4 1527.4,269.2 1530.0,269.6 1532.6,269.3 1535.3,269.6 1537.9,269.8 1540.5,259.5 1543.2,256.6 1545.8,264.3 1548.4,269.3 1551.1,269.5 1553.7,269.6 1556.3,269.9 1559.0,269.6 1561.6,269.3 1564.3,269.4 1566.9,269.8 1569.5,269.7 1572.2,259.4 1574.8,256.1" fill="none" stroke="#1064ad" stroke-width="1.6" stroke-linejoin="round" stroke-linecap="round"/>
<polyline points="815.7,197.6 818.3,193.9 821.0,196.0 823.6,193.6 826.2,197.2 828.9,193.6 831.5,192.8 834.2,195.5 836.8,194.1 839.4,195.8 842.1,195.0 844.7,195.1 847.3,197.5 850.0,195.2 852.6,195.1 855.2,197.6 857.9,197.4 860.5,198.2 863.1,196.2 865.8,193.0 868.4,195.2 871.1,198.0 873.7,194.9 876.3,195.4 879.0,196.2 881.6,198.4 884.2,194.2 886.9,196.8 889.5,190.1 892.1,194.3 894.8,193.5 897.4,193.5 900.0,197.3 902.7,194.7 905.3,193.6 908.0,196.9 910.6,196.9 913.2,195.0 915.9,197.9 918.5,194.6 921.1,191.1 923.8,193.2 926.4,199.0 929.0,198.8 931.7,191.4 934.3,194.1 936.9,194.7 939.6,196.0 942.2,190.3 944.9,197.3 947.5,196.4 950.1,194.0 952.8,199.1 955.4,198.4 958.0,194.5 960.7,193.0 963.3,193.0 965.9,195.9 968.6,192.2 971.2,193.2 973.8,193.5 976.5,192.4 979.1,191.5 981.8,195.7 984.4,198.3 987.0,189.8 989.7,196.2 992.3,193.9 994.9,197.8 997.6,195.7 1000.2,196.7 1002.8,193.0 1005.5,198.8 1008.1,192.7 1010.7,198.6 1013.4,192.7 1016.0,191.4 1018.7,193.0 1021.3,191.0 1023.9,188.5 1026.6,190.5 1029.2,177.6 1031.8,185.5 1034.5,188.5 1037.1,193.5 1039.7,190.7 1042.4,190.6 1045.0,192.0 1047.6,193.9 1050.3,189.0 1052.9,191.4 1055.6,193.0 1058.2,190.7 1060.8,191.6 1063.5,192.3 1066.1,189.6 1068.7,192.3 1071.4,192.5 1074.0,191.7 1076.6,190.8 1079.3,185.2 1081.9,193.0 1084.5,191.3 1087.2,192.7 1089.8,187.7 1092.5,189.3 1095.1,192.3 1097.7,192.6 1100.4,188.4 1103.0,192.1 1105.6,192.0 1108.3,191.4 1110.9,190.1 1113.5,188.9 1116.2,189.1 1118.8,193.0 1121.4,189.9 1124.1,190.3 1126.7,187.7 1129.4,193.1 1132.0,190.9 1134.6,189.5 1137.3,189.3 1139.9,186.3 1142.5,193.4 1145.2,192.4 1147.8,191.5 1150.4,193.3 1153.1,190.4 1155.7,192.2 1158.3,190.2 1161.0,189.7 1163.6,189.4 1166.3,193.5 1168.9,191.5 1171.5,189.2 1174.2,190.0 1176.8,191.5 1179.4,191.9 1182.1,186.7 1184.7,189.3 1187.3,192.0 1190.0,186.9 1192.6,189.3 1195.2,191.9 1197.9,188.1 1200.5,187.0 1203.2,189.7 1205.8,185.8 1208.4,189.1 1211.1,187.7 1213.7,191.6 1216.3,190.1 1219.0,191.8 1221.6,190.0 1224.2,187.4 1226.9,192.7 1229.5,188.3 1232.2,186.2 1234.8,188.1 1237.4,193.0 1240.1,190.3 1242.7,187.9 1245.3,191.9 1248.0,185.6 1250.6,185.6 1253.2,187.6 1255.9,193.5 1258.5,189.5 1261.1,191.7 1263.8,186.0 1266.4,193.1 1269.1,193.9 1271.7,192.4 1274.3,187.9 1277.0,190.3 1279.6,189.3 1282.2,186.8 1284.9,189.1 1287.5,184.5 1290.1,188.4 1292.8,188.7 1295.4,192.3 1298.0,188.5 1300.7,191.1 1303.3,186.0 1306.0,190.7 1308.6,188.9 1311.2,191.3 1313.9,189.6 1316.5,193.2 1319.1,184.8 1321.8,187.3 1324.4,193.5 1327.0,189.1 1329.7,185.7 1332.3,188.2 1334.9,188.1 1337.6,189.9 1340.2,190.3 1342.9,186.7 1345.5,189.4 1348.1,188.2 1350.8,187.8 1353.4,186.8 1356.0,192.2 1358.7,190.6 1361.3,186.3 1363.9,192.1 1366.6,183.8 1369.2,184.5 1371.8,189.3 1374.5,187.8 1377.1,189.0 1379.8,188.7 1382.4,187.9 1385.0,187.4 1387.7,188.2 1390.3,187.2 1392.9,190.7 1395.6,190.5 1398.2,186.1 1400.8,190.2 1403.5,184.7 1406.1,183.4 1408.7,183.4 1411.4,187.6 1414.0,188.1 1416.7,188.7 1419.3,190.8 1421.9,190.2 1424.6,185.2 1427.2,187.4 1429.8,187.6 1432.5,188.6 1435.1,189.6 1437.7,191.2 1440.4,190.3 1443.0,183.9 1445.6,191.9 1448.3,187.0 1450.9,186.9 1453.6,190.5 1456.2,187.4 1458.8,187.6 1461.5,187.2 1464.1,184.3 1466.7,190.6 1469.4,190.9 1472.0,187.8 1474.6,186.7 1477.3,187.1 1479.9,191.2 1482.5,184.6 1485.2,187.9 1487.8,189.9 1490.5,185.6 1493.1,189.4 1495.7,186.8 1498.4,189.7 1501.0,187.4 1503.6,187.3 1506.3,187.1 1508.9,185.3 1511.5,188.5 1514.2,189.9 1516.8,183.7 1519.4,185.0 1522.1,186.5 1524.7,185.0 1527.4,191.5 1530.0,188.7 1532.6,190.7 1535.3,188.6 1537.9,183.4 1540.5,187.6 1543.2,186.9 1545.8,184.9 1548.4,183.8 1551.1,188.4 1553.7,186.8 1556.3,187.5 1559.0,185.0 1561.6,186.4 1564.3,189.2 1566.9,185.9 1569.5,187.4 1572.2,189.4 1574.8,189.6" fill="none" stroke="#f5508f" stroke-width="1.8" stroke-linejoin="round" stroke-linecap="round"/>
<polyline points="815.7,267.4 818.3,268.2 821.0,268.9 823.6,268.8 826.2,269.0 828.9,268.9 831.5,268.7 834.2,269.0 836.8,269.0 839.4,268.8 842.1,269.0 844.7,267.6 847.3,267.4 850.0,268.3 852.6,269.1 855.2,268.8 857.9,268.8 860.5,269.0 863.1,269.0 865.8,268.9 868.4,269.0 871.1,268.8 873.7,269.1 876.3,267.7 879.0,267.3 881.6,268.4 884.2,268.8 886.9,268.9 889.5,268.9 892.1,268.8 894.8,269.1 897.4,268.8 900.0,268.9 902.7,269.1 905.3,269.0 908.0,267.7 910.6,267.5 913.2,268.2 915.9,268.9 918.5,268.8 921.1,269.1 923.8,268.9 926.4,268.8 929.0,268.8 931.7,269.0 934.3,268.8 936.9,269.0 939.6,267.7 942.2,267.6 944.9,268.2 947.5,268.8 950.1,269.0 952.8,269.0 955.4,269.1 958.0,269.1 960.7,268.9 963.3,269.1 965.9,268.7 968.6,269.1 971.2,267.6 973.8,267.5 976.5,268.1 979.1,269.0 981.8,268.9 984.4,269.1 987.0,268.7 989.7,268.7 992.3,268.7 994.9,268.7 997.6,269.0 1000.2,269.0 1002.8,267.6 1005.5,267.5 1008.1,268.5 1010.7,269.1 1013.4,268.9 1016.0,268.9 1018.7,268.8 1021.3,268.8 1023.9,269.1 1026.6,269.1 1029.2,269.0 1031.8,268.8 1034.5,267.6 1037.1,267.5 1039.7,268.3 1042.4,268.7 1045.0,268.9 1047.6,269.0 1050.3,268.9 1052.9,268.9 1055.6,269.1 1058.2,268.9 1060.8,268.8 1063.5,268.9 1066.1,267.8 1068.7,267.4 1071.4,268.2 1074.0,269.0 1076.6,268.7 1079.3,269.0 1081.9,269.0 1084.5,268.9 1087.2,268.7 1089.8,269.0 1092.5,268.9 1095.1,269.0 1097.7,267.8 1100.4,267.6 1103.0,268.4 1105.6,268.8 1108.3,268.9 1110.9,268.8 1113.5,269.1 1116.2,269.0 1118.8,269.0 1121.4,269.0 1124.1,269.1 1126.7,269.0 1129.4,267.8 1132.0,267.5 1134.6,268.4 1137.3,268.8 1139.9,269.1 1142.5,268.7 1145.2,269.1 1147.8,269.0 1150.4,268.8 1153.1,269.0 1155.7,268.9 1158.3,269.1 1161.0,267.7 1163.6,267.2 1166.3,268.1 1168.9,268.7 1171.5,269.0 1174.2,268.9 1176.8,269.0 1179.4,268.8 1182.1,269.0 1184.7,269.0 1187.3,268.7 1190.0,268.9 1192.6,267.6 1195.2,267.3 1197.9,268.5 1200.5,269.1 1203.2,268.9 1205.8,268.9 1208.4,269.0 1211.1,269.0 1213.7,268.9 1216.3,269.0 1219.0,268.9 1221.6,269.1 1224.2,267.6 1226.9,267.3 1229.5,268.1 1232.2,268.9 1234.8,269.0 1237.4,268.8 1240.1,269.0 1242.7,268.9 1245.3,268.8 1248.0,269.0 1250.6,268.7 1253.2,268.9 1255.9,267.9 1258.5,267.2 1261.1,268.3 1263.8,269.0 1266.4,268.8 1269.1,269.1 1271.7,268.8 1274.3,268.8 1277.0,269.0 1279.6,268.7 1282.2,268.8 1284.9,268.9 1287.5,267.6 1290.1,267.4 1292.8,268.2 1295.4,268.8 1298.0,269.1 1300.7,268.9 1303.3,269.1 1306.0,269.0 1308.6,269.0 1311.2,268.9 1313.9,269.0 1316.5,268.9 1319.1,267.9 1321.8,267.5 1324.4,268.2 1327.0,269.0 1329.7,269.1 1332.3,269.1 1334.9,268.8 1337.6,269.0 1340.2,268.9 1342.9,268.9 1345.5,268.8 1348.1,268.8 1350.8,267.7 1353.4,267.4 1356.0,268.4 1358.7,268.8 1361.3,269.1 1363.9,268.8 1366.6,269.1 1369.2,269.1 1371.8,268.8 1374.5,268.9 1377.1,269.1 1379.8,268.9 1382.4,267.6 1385.0,267.4 1387.7,268.2 1390.3,268.9 1392.9,269.1 1395.6,269.0 1398.2,268.8 1400.8,269.1 1403.5,269.0 1406.1,268.9 1408.7,269.0 1411.4,269.0 1414.0,267.8 1416.7,267.6 1419.3,268.5 1421.9,268.7 1424.6,268.9 1427.2,268.8 1429.8,268.9 1432.5,268.7 1435.1,269.0 1437.7,269.0 1440.4,269.0 1443.0,269.1 1445.6,267.7 1448.3,267.2 1450.9,268.3 1453.6,268.8 1456.2,268.9 1458.8,268.7 1461.5,268.9 1464.1,269.1 1466.7,268.9 1469.4,269.0 1472.0,268.7 1474.6,268.8 1477.3,267.9 1479.9,267.7 1482.5,268.4 1485.2,268.8 1487.8,269.1 1490.5,268.9 1493.1,269.0 1495.7,268.7 1498.4,269.0 1501.0,269.1 1503.6,268.7 1506.3,269.0 1508.9,267.6 1511.5,267.5 1514.2,268.5 1516.8,268.9 1519.4,269.0 1522.1,268.8 1524.7,269.0 1527.4,268.9 1530.0,268.8 1532.6,269.1 1535.3,268.8 1537.9,268.8 1540.5,267.6 1543.2,267.5 1545.8,268.3 1548.4,268.9 1551.1,268.9 1553.7,268.9 1556.3,268.7 1559.0,268.7 1561.6,268.9 1564.3,268.8 1566.9,269.0 1569.5,268.8 1572.2,267.6 1574.8,267.5" fill="none" stroke="#f5d20a" stroke-width="1.5" stroke-linejoin="round" stroke-linecap="round"/>
<polyline points="815.7,238.8 818.3,254.1 821.0,268.4 823.6,269.0 826.2,269.0 828.9,269.4 831.5,269.1 834.2,268.7 836.8,268.6 839.4,268.6 842.1,268.8 844.7,243.0 847.3,238.7 850.0,255.1 852.6,267.8 855.2,268.8 857.9,268.8 860.5,269.4 863.1,269.2 865.8,268.9 868.4,268.7 871.1,268.5 873.7,268.6 876.3,240.8 879.0,239.8 881.6,255.4 884.2,267.7 886.9,269.2 889.5,269.2 892.1,269.0 894.8,268.7 897.4,269.2 900.0,268.9 902.7,269.2 905.3,268.6 908.0,240.0 910.6,239.4 913.2,254.7 915.9,268.6 918.5,268.8 921.1,268.8 923.8,269.2 926.4,268.7 929.0,268.9 931.7,269.2 934.3,268.9 936.9,268.7 939.6,242.9 942.2,237.5 944.9,255.3 947.5,267.8 950.1,269.2 952.8,269.0 955.4,269.3 958.0,268.8 960.7,269.4 963.3,269.3 965.9,269.0 968.6,268.6 971.2,241.3 973.8,238.2 976.5,255.1 979.1,268.3 981.8,269.3 984.4,268.6 987.0,268.8 989.7,268.6 992.3,269.1 994.9,269.2 997.6,268.8 1000.2,269.2 1002.8,242.2 1005.5,239.8 1008.1,254.3 1010.7,268.4 1013.4,269.4 1016.0,269.1 1018.7,268.7 1021.3,269.4 1023.9,269.2 1026.6,268.6 1029.2,268.9 1031.8,269.2 1034.5,242.6 1037.1,239.4 1039.7,253.8 1042.4,268.3 1045.0,269.4 1047.6,269.1 1050.3,269.5 1052.9,269.1 1055.6,269.4 1058.2,269.1 1060.8,268.7 1063.5,269.0 1066.1,241.5 1068.7,239.0 1071.4,254.3 1074.0,268.1 1076.6,269.0 1079.3,268.9 1081.9,269.2 1084.5,268.7 1087.2,269.0 1089.8,268.8 1092.5,269.3 1095.1,269.2 1097.7,240.9 1100.4,239.8 1103.0,254.6 1105.6,268.0 1108.3,269.2 1110.9,269.3 1113.5,269.0 1116.2,269.2 1118.8,268.7 1121.4,269.0 1124.1,268.9 1126.7,268.8 1129.4,242.3 1132.0,237.6 1134.6,255.4 1137.3,268.3 1139.9,269.1 1142.5,269.2 1145.2,268.8 1147.8,268.6 1150.4,268.9 1153.1,268.5 1155.7,269.5 1158.3,269.0 1161.0,241.6 1163.6,237.4 1166.3,254.6 1168.9,268.3 1171.5,269.0 1174.2,268.9 1176.8,268.8 1179.4,269.0 1182.1,269.2 1184.7,269.4 1187.3,269.3 1190.0,269.4 1192.6,241.7 1195.2,239.7 1197.9,254.8 1200.5,268.5 1203.2,269.4 1205.8,268.8 1208.4,269.4 1211.1,269.4 1213.7,268.9 1216.3,268.7 1219.0,269.3 1221.6,268.9 1224.2,243.1 1226.9,238.7 1229.5,254.3 1232.2,268.0 1234.8,268.9 1237.4,268.5 1240.1,268.9 1242.7,269.3 1245.3,268.8 1248.0,269.2 1250.6,269.1 1253.2,268.7 1255.9,243.2 1258.5,238.1 1261.1,255.5 1263.8,267.8 1266.4,269.1 1269.1,269.1 1271.7,268.8 1274.3,268.5 1277.0,268.8 1279.6,269.1 1282.2,269.1 1284.9,269.0 1287.5,242.4 1290.1,239.1 1292.8,255.3 1295.4,268.6 1298.0,268.7 1300.7,269.4 1303.3,268.7 1306.0,269.1 1308.6,268.9 1311.2,268.5 1313.9,269.3 1316.5,269.3 1319.1,242.6 1321.8,239.2 1324.4,255.3 1327.0,268.2 1329.7,269.3 1332.3,269.3 1334.9,269.0 1337.6,268.9 1340.2,269.3 1342.9,268.6 1345.5,268.8 1348.1,269.3 1350.8,242.3 1353.4,239.8 1356.0,254.6 1358.7,267.7 1361.3,268.9 1363.9,268.9 1366.6,269.0 1369.2,268.8 1371.8,269.2 1374.5,269.0 1377.1,269.5 1379.8,268.7 1382.4,241.6 1385.0,239.4 1387.7,255.5 1390.3,267.9 1392.9,269.1 1395.6,269.1 1398.2,268.8 1400.8,268.6 1403.5,269.5 1406.1,268.9 1408.7,268.6 1411.4,269.2 1414.0,241.4 1416.7,239.5 1419.3,254.9 1421.9,267.9 1424.6,268.9 1427.2,268.7 1429.8,269.2 1432.5,269.2 1435.1,268.9 1437.7,268.9 1440.4,268.7 1443.0,269.3 1445.6,242.1 1448.3,239.2 1450.9,255.1 1453.6,268.2 1456.2,269.2 1458.8,269.0 1461.5,269.0 1464.1,268.7 1466.7,268.7 1469.4,269.1 1472.0,269.2 1474.6,268.8 1477.3,240.9 1479.9,237.9 1482.5,254.5 1485.2,267.7 1487.8,269.0 1490.5,269.1 1493.1,268.6 1495.7,268.8 1498.4,269.2 1501.0,269.0 1503.6,269.1 1506.3,269.3 1508.9,241.2 1511.5,239.1 1514.2,254.9 1516.8,268.0 1519.4,269.5 1522.1,269.3 1524.7,269.2 1527.4,268.6 1530.0,269.1 1532.6,268.5 1535.3,269.4 1537.9,269.5 1540.5,240.8 1543.2,237.2 1545.8,254.3 1548.4,268.5 1551.1,268.9 1553.7,269.3 1556.3,269.2 1559.0,269.0 1561.6,269.4 1564.3,268.7 1566.9,269.4 1569.5,268.8 1572.2,242.8 1574.8,239.5" fill="none" stroke="#0e6a2e" stroke-width="1.6" stroke-linejoin="round" stroke-linecap="round"/>
<polyline points="815.7,250.2 818.3,261.9 821.0,271.3 823.6,271.3 826.2,271.2 828.9,271.4 831.5,270.7 834.2,271.2 836.8,270.5 839.4,271.3 842.1,271.2 844.7,253.2 847.3,252.2 850.0,261.9 852.6,270.4 855.2,271.0 857.9,270.8 860.5,271.1 863.1,270.7 865.8,270.4 868.4,271.3 871.1,270.5 873.7,271.1 876.3,253.0 879.0,250.4 881.6,261.8 884.2,270.6 886.9,270.8 889.5,270.8 892.1,270.2 894.8,271.1 897.4,271.1 900.0,271.3 902.7,270.6 905.3,270.5 908.0,254.4 910.6,250.5 913.2,261.4 915.9,270.8 918.5,270.8 921.1,271.1 923.8,270.4 926.4,271.1 929.0,270.6 931.7,271.2 934.3,270.3 936.9,270.5 939.6,253.6 942.2,251.3 944.9,262.0 947.5,271.2 950.1,270.5 952.8,271.2 955.4,270.9 958.0,270.9 960.7,271.0 963.3,270.4 965.9,271.1 968.6,270.6 971.2,253.6 973.8,250.9 976.5,262.1 979.1,270.4 981.8,270.3 984.4,270.7 987.0,270.8 989.7,270.4 992.3,270.5 994.9,271.2 997.6,270.7 1000.2,270.4 1002.8,254.5 1005.5,251.5 1008.1,261.7 1010.7,271.2 1013.4,270.2 1016.0,271.3 1018.7,270.4 1021.3,270.2 1023.9,271.1 1026.6,270.9 1029.2,270.8 1031.8,270.5 1034.5,253.2 1037.1,250.1 1039.7,262.0 1042.4,270.8 1045.0,270.3 1047.6,271.0 1050.3,271.0 1052.9,270.4 1055.6,270.9 1058.2,271.1 1060.8,270.3 1063.5,271.2 1066.1,252.7 1068.7,250.9 1071.4,261.6 1074.0,270.5 1076.6,270.6 1079.3,270.8 1081.9,270.6 1084.5,271.1 1087.2,271.1 1089.8,270.3 1092.5,270.5 1095.1,270.2 1097.7,253.7 1100.4,250.8 1103.0,261.0 1105.6,271.1 1108.3,270.7 1110.9,271.3 1113.5,270.7 1116.2,270.6 1118.8,270.3 1121.4,271.3 1124.1,270.8 1126.7,270.7 1129.4,254.3 1132.0,250.2 1134.6,262.0 1137.3,270.7 1139.9,271.0 1142.5,270.9 1145.2,270.8 1147.8,270.9 1150.4,270.5 1153.1,270.9 1155.7,271.2 1158.3,270.3 1161.0,254.6 1163.6,249.4 1166.3,261.9 1168.9,270.8 1171.5,270.4 1174.2,270.6 1176.8,271.1 1179.4,271.1 1182.1,270.4 1184.7,271.0 1187.3,271.0 1190.0,271.0 1192.6,254.6 1195.2,251.4 1197.9,261.6 1200.5,270.5 1203.2,271.1 1205.8,270.6 1208.4,270.9 1211.1,271.2 1213.7,270.3 1216.3,271.1 1219.0,270.3 1221.6,271.3 1224.2,255.0 1226.9,250.8 1229.5,261.9 1232.2,270.3 1234.8,270.8 1237.4,270.6 1240.1,271.4 1242.7,270.7 1245.3,270.7 1248.0,270.5 1250.6,271.4 1253.2,270.6 1255.9,254.0 1258.5,251.4 1261.1,261.6 1263.8,270.7 1266.4,271.2 1269.1,270.4 1271.7,270.7 1274.3,271.1 1277.0,270.5 1279.6,270.4 1282.2,270.8 1284.9,270.7 1287.5,253.6 1290.1,251.5 1292.8,261.4 1295.4,271.3 1298.0,270.6 1300.7,270.9 1303.3,271.1 1306.0,270.3 1308.6,271.3 1311.2,270.3 1313.9,270.6 1316.5,271.1 1319.1,254.6 1321.8,251.6 1324.4,261.9 1327.0,270.3 1329.7,270.3 1332.3,270.4 1334.9,270.8 1337.6,270.4 1340.2,271.2 1342.9,270.7 1345.5,270.5 1348.1,270.5 1350.8,252.8 1353.4,249.9 1356.0,261.3 1358.7,271.2 1361.3,270.3 1363.9,270.3 1366.6,271.0 1369.2,270.9 1371.8,271.1 1374.5,270.5 1377.1,270.8 1379.8,270.4 1382.4,253.7 1385.0,250.5 1387.7,262.2 1390.3,271.2 1392.9,270.8 1395.6,270.5 1398.2,270.3 1400.8,270.8 1403.5,270.8 1406.1,271.1 1408.7,270.6 1411.4,270.7 1414.0,252.9 1416.7,250.4 1419.3,261.9 1421.9,271.2 1424.6,270.9 1427.2,270.4 1429.8,271.4 1432.5,271.0 1435.1,271.2 1437.7,270.9 1440.4,270.3 1443.0,271.2 1445.6,254.2 1448.3,250.3 1450.9,262.1 1453.6,271.0 1456.2,270.3 1458.8,270.8 1461.5,271.0 1464.1,271.0 1466.7,270.3 1469.4,270.4 1472.0,271.4 1474.6,270.7 1477.3,253.9 1479.9,250.8 1482.5,261.6 1485.2,270.8 1487.8,270.4 1490.5,271.3 1493.1,271.4 1495.7,271.1 1498.4,271.4 1501.0,270.8 1503.6,271.2 1506.3,270.5 1508.9,253.7 1511.5,250.4 1514.2,261.2 1516.8,270.8 1519.4,270.6 1522.1,270.6 1524.7,271.2 1527.4,271.2 1530.0,271.2 1532.6,271.0 1535.3,270.4 1537.9,270.4 1540.5,253.4 1543.2,250.8 1545.8,262.4 1548.4,271.2 1551.1,270.6 1553.7,271.2 1556.3,270.6 1559.0,270.5 1561.6,270.7 1564.3,270.2 1566.9,270.7 1569.5,270.7 1572.2,255.2 1574.8,250.6" fill="none" stroke="#ff9f55" stroke-width="1.9" stroke-linejoin="round" stroke-linecap="round"/>
<polyline points="815.7,265.0 818.3,265.9 821.0,267.3 823.6,267.2 826.2,267.1 828.9,266.8 831.5,266.9 834.2,267.6 836.8,267.0 839.4,267.6 842.1,267.5 844.7,266.1 847.3,265.7 850.0,266.6 852.6,267.4 855.2,266.7 857.9,267.1 860.5,266.8 863.1,267.0 865.8,266.8 868.4,267.3 871.1,267.2 873.7,267.4 876.3,265.8 879.0,265.6 881.6,266.2 884.2,267.0 886.9,266.7 889.5,266.9 892.1,267.3 894.8,267.6 897.4,267.3 900.0,267.3 902.7,267.6 905.3,267.4 908.0,265.7 910.6,265.1 913.2,266.5 915.9,266.8 918.5,267.3 921.1,267.5 923.8,266.7 926.4,266.7 929.0,267.1 931.7,266.9 934.3,267.6 936.9,267.6 939.6,266.0 942.2,265.0 944.9,266.0 947.5,267.0 950.1,266.6 952.8,267.1 955.4,267.0 958.0,267.6 960.7,267.0 963.3,267.5 965.9,267.4 968.6,267.2 971.2,265.5 973.8,265.2 976.5,266.4 979.1,267.2 981.8,267.6 984.4,266.8 987.0,266.9 989.7,266.6 992.3,266.7 994.9,266.6 997.6,267.0 1000.2,267.5 1002.8,266.2 1005.5,265.4 1008.1,265.8 1010.7,266.8 1013.4,267.2 1016.0,266.6 1018.7,267.1 1021.3,267.0 1023.9,267.1 1026.6,267.0 1029.2,266.7 1031.8,267.4 1034.5,265.8 1037.1,265.5 1039.7,266.9 1042.4,266.6 1045.0,267.5 1047.6,267.3 1050.3,266.9 1052.9,267.6 1055.6,267.5 1058.2,267.5 1060.8,266.8 1063.5,267.2 1066.1,265.5 1068.7,265.4 1071.4,266.4 1074.0,267.2 1076.6,267.6 1079.3,267.2 1081.9,267.6 1084.5,266.6 1087.2,267.1 1089.8,267.2 1092.5,267.3 1095.1,267.6 1097.7,265.6 1100.4,265.3 1103.0,266.8 1105.6,266.9 1108.3,267.5 1110.9,266.6 1113.5,267.4 1116.2,266.6 1118.8,267.3 1121.4,267.4 1124.1,266.8 1126.7,267.0 1129.4,266.0 1132.0,265.4 1134.6,266.5 1137.3,267.4 1139.9,267.6 1142.5,266.8 1145.2,267.1 1147.8,267.0 1150.4,266.9 1153.1,267.4 1155.7,266.7 1158.3,267.2 1161.0,266.1 1163.6,265.2 1166.3,266.8 1168.9,267.5 1171.5,267.0 1174.2,267.2 1176.8,267.6 1179.4,266.6 1182.1,266.9 1184.7,266.7 1187.3,266.7 1190.0,266.9 1192.6,265.7 1195.2,265.7 1197.9,266.0 1200.5,267.5 1203.2,266.8 1205.8,267.6 1208.4,267.4 1211.1,266.8 1213.7,266.6 1216.3,267.5 1219.0,267.5 1221.6,266.7 1224.2,266.0 1226.9,265.7 1229.5,266.1 1232.2,267.6 1234.8,266.9 1237.4,267.3 1240.1,267.3 1242.7,267.5 1245.3,267.2 1248.0,266.9 1250.6,266.8 1253.2,267.1 1255.9,266.1 1258.5,265.0 1261.1,266.5 1263.8,267.4 1266.4,267.4 1269.1,266.9 1271.7,266.7 1274.3,266.9 1277.0,267.4 1279.6,267.1 1282.2,267.4 1284.9,266.7 1287.5,265.6 1290.1,264.9 1292.8,266.7 1295.4,267.3 1298.0,266.6 1300.7,266.8 1303.3,267.3 1306.0,267.5 1308.6,267.0 1311.2,267.0 1313.9,266.6 1316.5,266.9 1319.1,266.0 1321.8,265.6 1324.4,266.6 1327.0,267.0 1329.7,266.9 1332.3,266.9 1334.9,267.4 1337.6,266.8 1340.2,266.9 1342.9,266.9 1345.5,267.5 1348.1,267.3 1350.8,265.6 1353.4,265.7 1356.0,266.4 1358.7,266.8 1361.3,266.8 1363.9,266.7 1366.6,267.1 1369.2,267.4 1371.8,266.7 1374.5,267.0 1377.1,267.6 1379.8,267.1 1382.4,266.1 1385.0,265.1 1387.7,266.5 1390.3,267.6 1392.9,267.3 1395.6,266.9 1398.2,267.1 1400.8,266.9 1403.5,267.0 1406.1,267.1 1408.7,267.6 1411.4,267.5 1414.0,265.6 1416.7,264.9 1419.3,266.5 1421.9,267.0 1424.6,267.6 1427.2,266.6 1429.8,267.5 1432.5,267.5 1435.1,267.0 1437.7,267.5 1440.4,266.8 1443.0,267.4 1445.6,265.6 1448.3,265.7 1450.9,265.9 1453.6,266.8 1456.2,267.0 1458.8,267.0 1461.5,267.2 1464.1,267.5 1466.7,267.6 1469.4,267.2 1472.0,267.0 1474.6,266.7 1477.3,265.8 1479.9,265.3 1482.5,266.2 1485.2,267.0 1487.8,266.7 1490.5,267.6 1493.1,267.2 1495.7,267.1 1498.4,267.0 1501.0,266.8 1503.6,266.9 1506.3,267.1 1508.9,266.2 1511.5,265.0 1514.2,266.0 1516.8,267.4 1519.4,267.5 1522.1,266.8 1524.7,267.4 1527.4,267.0 1530.0,267.1 1532.6,267.1 1535.3,266.6 1537.9,266.6 1540.5,265.9 1543.2,265.8 1545.8,266.1 1548.4,267.2 1551.1,267.3 1553.7,266.8 1556.3,266.6 1559.0,267.1 1561.6,266.6 1564.3,267.4 1566.9,267.2 1569.5,266.9 1572.2,265.4 1574.8,265.0" fill="none" stroke="#a94fff" stroke-width="1.9" stroke-linejoin="round" stroke-linecap="round"/>
<text x="830.1" y="308.4" class="ax" textLength="23.4" lengthAdjust="spacingAndGlyphs">12:00</text><text x="956.6" y="308.4" class="ax" textLength="23.4" lengthAdjust="spacingAndGlyphs">16:00</text><text x="1083.1" y="308.4" class="ax" textLength="23.4" lengthAdjust="spacingAndGlyphs">20:00</text><text x="1209.6" y="308.4" class="ax" textLength="23.4" lengthAdjust="spacingAndGlyphs">Nov 7</text><text x="1338.5" y="308.4" class="ax" textLength="18.6" lengthAdjust="spacingAndGlyphs">4:00</text><text x="1465.0" y="308.4" class="ax" textLength="18.6" lengthAdjust="spacingAndGlyphs">8:00</text>
<line x1="7.0" x2="761.9" y1="381.7" y2="381.7" stroke="#353535" stroke-width="1.3"/><line x1="7.0" x2="761.9" y1="410.7" y2="410.7" stroke="#353535" stroke-width="1.3"/><line x1="7.0" x2="761.9" y1="439.7" y2="439.7" stroke="#353535" stroke-width="1.3"/><line x1="7.0" x2="761.9" y1="468.7" y2="468.7" stroke="#353535" stroke-width="1.3"/><line x1="7.0" x2="761.9" y1="497.7" y2="497.7" stroke="#353535" stroke-width="1.3"/><line x1="7.0" x2="761.9" y1="526.7" y2="526.7" stroke="#353535" stroke-width="1.3"/>
<polyline points="7.0,448.0 9.6,487.3 12.2,526.6 14.9,500.4 17.5,500.4 20.1,526.6 22.7,526.6 25.4,526.6 28.0,500.4 30.6,526.6 33.2,500.4 35.8,526.6 38.5,487.3 41.1,448.0 43.7,500.4 46.3,474.2 48.9,526.6 51.6,500.4 54.2,500.4 56.8,474.2 59.4,474.2 62.1,474.2 64.7,474.2 67.3,526.6 69.9,526.6 72.5,500.4 75.2,500.4 77.8,500.4 80.4,474.2 83.0,500.4 85.6,526.6 88.3,448.0 90.9,500.4 93.5,500.4 96.1,500.4 98.8,474.2 101.4,500.4 104.0,461.1 106.6,421.8 109.2,500.4 111.9,448.0 114.5,487.3 117.1,526.6 119.7,500.4 122.3,474.2 125.0,474.2 127.6,448.0 130.2,526.6 132.8,474.2 135.5,526.6 138.1,500.4 140.7,500.4 143.3,500.4 145.9,500.4 148.6,474.2 151.2,500.4 153.8,526.6 156.4,500.4 159.0,500.4 161.7,500.4 164.3,526.6 166.9,500.4 169.5,500.4 172.2,526.6 174.8,448.0 177.4,474.2 180.0,448.0 182.6,500.4 185.3,500.4 187.9,500.4 190.5,526.6 193.1,500.4 195.8,500.4 198.4,500.4 201.0,474.2 203.6,526.6 206.2,526.6 208.9,500.4 211.5,526.6 214.1,500.4 216.7,526.6 219.3,500.4 222.0,500.4 224.6,526.6 227.2,500.4 229.8,526.6 232.5,500.4 235.1,500.4 237.7,526.6 240.3,487.3 242.9,448.0 245.6,500.4 248.2,500.4 250.8,500.4 253.4,526.6 256.0,500.4 258.7,500.4 261.3,526.6 263.9,500.4 266.5,474.2 269.2,500.4 271.8,500.4 274.4,500.4 277.0,448.0 279.6,526.6 282.3,500.4 284.9,474.2 287.5,500.4 290.1,500.4 292.7,500.4 295.4,448.0 298.0,495.2 300.6,500.4 303.2,500.4 305.9,526.6 308.5,500.4 311.1,474.2 313.7,526.6 316.3,474.2 319.0,474.2 321.6,474.2 324.2,497.8 326.8,495.2 329.4,503.0 332.1,526.6 334.7,448.0 337.3,526.6 339.9,500.4 342.6,474.2 345.2,526.6 347.8,500.4 350.4,526.6 353.0,500.4 355.7,500.4 358.3,474.2 360.9,500.4 363.5,448.0 366.1,474.2 368.8,500.4 371.4,448.0 374.0,500.4 376.6,474.2 379.3,500.4 381.9,526.6 384.5,526.6 387.1,500.4 389.7,500.4 392.4,526.6 395.0,526.6 397.6,487.3 400.2,448.0 402.9,500.4 405.5,500.4 408.1,474.2 410.7,474.2 413.3,526.6 416.0,500.4 418.6,474.2 421.2,526.6 423.8,448.0 426.4,500.4 429.1,500.4 431.7,500.4 434.3,500.4 436.9,474.2 439.6,526.6 442.2,526.6 444.8,448.0 447.4,526.6 450.0,474.2 452.7,474.2 455.3,500.4 457.9,500.4 460.5,500.4 463.1,474.2 465.8,474.2 468.4,474.2 471.0,474.2 473.6,526.6 476.3,500.4 478.9,500.4 481.5,500.4 484.1,474.2 486.7,500.4 489.4,526.6 492.0,500.4 494.6,474.2 497.2,526.6 499.8,500.4 502.5,500.4 505.1,500.4 507.7,500.4 510.3,474.2 513.0,448.0 515.6,526.6 518.2,487.3 520.8,448.0 523.4,474.2 526.1,500.4 528.7,500.4 531.3,474.2 533.9,474.2 536.5,474.2 539.2,500.4 541.8,448.0 544.4,526.6 547.0,526.6 549.7,526.6 552.3,526.6 554.9,474.2 557.5,500.4 560.1,500.4 562.8,500.4 565.4,474.2 568.0,500.4 570.6,474.2 573.2,505.6 575.9,526.6 578.5,500.4 581.1,500.4 583.7,500.4 586.4,474.2 589.0,474.2 591.6,500.4 594.2,474.2 596.8,474.2 599.5,500.4 602.1,500.4 604.7,474.2 607.3,526.6 610.0,526.6 612.6,448.0 615.2,500.4 617.8,448.0 620.4,487.3 623.1,526.6 625.7,500.4 628.3,500.4 630.9,500.4 633.5,474.2 636.2,500.4 638.8,500.4 641.4,500.4 644.0,474.2 646.7,500.4 649.3,526.6 651.9,500.4 654.5,500.4 657.1,526.6 659.8,474.2 662.4,500.4 665.0,500.4 667.6,500.4 670.2,500.4 672.9,526.6 675.5,500.4 678.1,500.4 680.7,500.4 683.4,526.6 686.0,526.6 688.6,526.6 691.2,526.6 693.8,500.4 696.5,526.6 699.1,474.2 701.7,474.2 704.3,500.4 706.9,500.4 709.6,500.4 712.2,526.6 714.8,500.4 717.4,474.2 720.1,448.0 722.7,487.3 725.3,526.6 727.9,474.2 730.5,526.6 733.2,526.6 735.8,419.2 738.4,526.6 741.0,474.2 743.6,448.0 746.3,474.2 748.9,500.4 751.5,474.2 754.1,526.6 756.8,474.2 759.4,500.4 762.0,461.1" fill="none" stroke="#f5508f" stroke-width="1.7" stroke-linejoin="round" stroke-linecap="round"/>
<polyline points="7.0,525.3 9.6,526.0 12.2,525.3 14.9,525.9 17.5,523.4 20.1,526.3 22.7,526.3 25.4,525.9 28.0,523.7 30.6,523.4 33.2,525.3 35.8,524.9 38.5,525.9 41.1,523.7 43.7,524.1 46.3,525.9 48.9,522.0 51.6,526.0 54.2,525.1 56.8,524.9 59.4,526.0 62.1,522.1 64.7,524.3 67.3,524.9 69.9,526.2 72.5,525.0 75.2,523.8 77.8,523.4 80.4,523.4 83.0,524.4 85.6,524.7 88.3,523.4 90.9,524.6 93.5,525.7 96.1,526.3 98.8,524.6 101.4,522.2 104.0,522.0 106.6,524.9 109.2,526.3 111.9,523.7 114.5,524.7 117.1,524.3 119.7,523.4 122.3,525.9 125.0,523.8 127.6,523.5 130.2,524.9 132.8,524.9 135.5,524.9 138.1,523.1 140.7,522.0 143.3,525.9 145.9,526.3 148.6,525.9 151.2,525.1 153.8,526.3 156.4,524.4 159.0,523.4 161.7,524.9 164.3,524.6 166.9,523.4 169.5,525.9 172.2,524.6 174.8,523.5 177.4,524.1 180.0,523.4 182.6,523.8 185.3,524.9 187.9,524.9 190.5,524.0 193.1,523.4 195.8,525.9 198.4,524.9 201.0,524.4 203.6,523.1 206.2,522.0 208.9,524.6 211.5,524.9 214.1,524.9 216.7,522.0 219.3,524.1 222.0,526.0 224.6,524.9 227.2,522.2 229.8,520.5 232.5,523.0 235.1,524.9 237.7,526.3 240.3,525.0 242.9,525.0 245.6,526.3 248.2,525.1 250.8,526.3 253.4,523.8 256.0,522.0 258.7,523.7 261.3,523.5 263.9,525.6 266.5,522.0 269.2,525.6 271.8,522.0 274.4,525.9 277.0,523.4 279.6,523.7 282.3,525.9 284.9,526.3 287.5,524.4 290.1,523.4 292.7,526.3 295.4,522.0 298.0,526.3 300.6,525.1 303.2,524.7 305.9,523.4 308.5,524.7 311.1,524.9 313.7,524.9 316.3,524.9 319.0,525.0 321.6,526.0 324.2,524.1 326.8,522.7 329.4,525.3 332.1,523.4 334.7,524.6 337.3,524.9 339.9,524.9 342.6,526.0 345.2,523.4 347.8,524.6 350.4,524.9 353.0,523.3 355.7,523.3 358.3,524.6 360.9,526.3 363.5,525.0 366.1,524.7 368.8,523.3 371.4,523.3 374.0,524.6 376.6,524.9 379.3,525.0 381.9,526.3 384.5,523.7 387.1,524.6 389.7,523.4 392.4,523.4 395.0,524.6 397.6,523.4 400.2,523.4 402.9,524.7 405.5,524.9 408.1,525.0 410.7,526.2 413.3,524.9 416.0,524.7 418.6,523.4 421.2,526.0 423.8,522.0 426.4,524.6 429.1,524.9 431.7,524.9 434.3,524.9 436.9,523.4 439.6,526.3 442.2,523.4 444.8,524.9 447.4,524.9 450.0,524.9 452.7,523.4 455.3,522.0 457.9,525.9 460.5,524.1 463.1,522.0 465.8,524.9 468.4,524.9 471.0,524.9 473.6,524.9 476.3,522.0 478.9,524.9 481.5,523.4 484.1,522.0 486.7,524.9 489.4,526.3 492.0,523.4 494.6,524.9 497.2,522.1 499.8,524.9 502.5,523.4 505.1,523.1 507.7,520.5 510.3,524.1 513.0,526.3 515.6,523.4 518.2,524.9 520.8,526.3 523.4,523.4 526.1,522.0 528.7,522.0 531.3,523.3 533.9,522.0 536.5,525.9 539.2,523.8 541.8,526.3 544.4,526.3 547.0,525.0 549.7,524.9 552.3,524.6 554.9,523.4 557.5,523.4 560.1,523.4 562.8,523.4 565.4,524.9 568.0,525.9 570.6,526.3 573.2,523.4 575.9,524.9 578.5,523.4 581.1,524.9 583.7,524.1 586.4,522.0 589.0,524.6 591.6,523.4 594.2,524.9 596.8,526.0 599.5,525.0 602.1,524.9 604.7,525.9 607.3,523.4 610.0,524.9 612.6,524.9 615.2,524.9 617.8,523.4 620.4,524.6 623.1,526.3 625.7,525.0 628.3,524.9 630.9,524.9 633.5,524.7 636.2,523.4 638.8,524.7 641.4,524.9 644.0,524.9 646.7,526.0 649.3,526.3 651.9,523.4 654.5,522.0 657.1,524.7 659.8,524.9 662.4,524.9 665.0,524.9 667.6,524.9 670.2,524.9 672.9,524.9 675.5,524.9 678.1,524.9 680.7,526.3 683.4,526.3 686.0,526.3 688.6,526.3 691.2,525.9 693.8,523.4 696.5,524.9 699.1,524.7 701.7,523.4 704.3,525.9 706.9,524.9 709.6,525.0 712.2,526.3 714.8,524.9 717.4,523.4 720.1,524.7 722.7,526.3 725.3,526.0 727.9,524.1 730.5,523.4 733.2,526.3 735.8,524.9 738.4,525.9 741.0,520.5 743.6,524.6 746.3,523.4 748.9,524.4 751.5,524.9 754.1,523.4 756.8,524.6 759.4,526.3 762.0,522.5" fill="none" stroke="#f5d20a" stroke-width="1.8" stroke-linejoin="round" stroke-linecap="round"/>
<polyline points="7.0,527.0 9.6,527.0 12.2,527.0 14.9,527.0 17.5,527.0 20.1,527.0 22.7,527.0 25.4,527.0 28.0,527.0 30.6,527.0 33.2,527.0 35.8,527.0 38.5,527.0 41.1,527.0 43.7,527.0 46.3,527.0 48.9,527.0 51.6,527.0 54.2,527.0 56.8,527.0 59.4,527.0 62.1,527.0 64.7,527.0 67.3,527.0 69.9,527.0 72.5,527.0 75.2,527.0 77.8,527.0 80.4,527.0 83.0,527.0 85.6,527.0 88.3,527.0 90.9,527.0 93.5,527.0 96.1,527.0 98.8,527.0 101.4,527.0 104.0,527.0 106.6,527.0 109.2,527.0 111.9,527.0 114.5,527.0 117.1,527.0 119.7,527.0 122.3,527.0 125.0,527.0 127.6,527.0 130.2,527.0 132.8,527.0 135.5,527.0 138.1,527.0 140.7,527.0 143.3,527.0 145.9,527.0 148.6,527.0 151.2,527.0 153.8,527.0 156.4,527.0 159.0,527.0 161.7,527.0 164.3,527.0 166.9,527.0 169.5,527.0 172.2,527.0 174.8,527.0 177.4,527.0 180.0,527.0 182.6,527.0 185.3,527.0 187.9,527.0 190.5,527.0 193.1,527.0 195.8,527.0 198.4,527.0 201.0,527.0 203.6,527.0 206.2,527.0 208.9,527.0 211.5,527.0 214.1,527.0 216.7,527.0 219.3,527.0 222.0,527.0 224.6,527.0 227.2,527.0 229.8,527.0 232.5,527.0 235.1,527.0 237.7,527.0 240.3,527.0 242.9,527.0 245.6,527.0 248.2,527.0 250.8,527.0 253.4,527.0 256.0,527.0 258.7,527.0 261.3,527.0 263.9,527.0 266.5,527.0 269.2,527.0 271.8,527.0 274.4,527.0 277.0,527.0 279.6,527.0 282.3,527.0 284.9,527.0 287.5,527.0 290.1,527.0 292.7,527.0 295.4,527.0 298.0,527.0 300.6,527.0 303.2,527.0 305.9,527.0 308.5,527.0 311.1,527.0 313.7,527.0 316.3,527.0 319.0,527.0 321.6,527.0 324.2,527.0 326.8,527.0 329.4,527.0 332.1,527.0 334.7,527.0 337.3,527.0 339.9,527.0 342.6,527.0 345.2,527.0 347.8,527.0 350.4,527.0 353.0,527.0 355.7,527.0 358.3,527.0 360.9,527.0 363.5,527.0 366.1,527.0 368.8,527.0 371.4,527.0 374.0,527.0 376.6,527.0 379.3,527.0 381.9,527.0 384.5,527.0 387.1,527.0 389.7,527.0 392.4,527.0 395.0,527.0 397.6,527.0 400.2,527.0 402.9,527.0 405.5,527.0 408.1,527.0 410.7,527.0 413.3,527.0 416.0,527.0 418.6,527.0 421.2,527.0 423.8,527.0 426.4,527.0 429.1,527.0 431.7,527.0 434.3,527.0 436.9,527.0 439.6,527.0 442.2,527.0 444.8,527.0 447.4,527.0 450.0,527.0 452.7,527.0 455.3,527.0 457.9,527.0 460.5,527.0 463.1,527.0 465.8,527.0 468.4,527.0 471.0,527.0 473.6,527.0 476.3,527.0 478.9,527.0 481.5,527.0 484.1,527.0 486.7,527.0 489.4,527.0 492.0,527.0 494.6,527.0 497.2,527.0 499.8,527.0 502.5,527.0 505.1,527.0 507.7,527.0 510.3,527.0 513.0,527.0 515.6,527.0 518.2,527.0 520.8,527.0 523.4,527.0 526.1,527.0 528.7,527.0 531.3,527.0 533.9,527.0 536.5,527.0 539.2,527.0 541.8,527.0 544.4,527.0 547.0,527.0 549.7,527.0 552.3,527.0 554.9,527.0 557.5,527.0 560.1,527.0 562.8,527.0 565.4,527.0 568.0,527.0 570.6,527.0 573.2,527.0 575.9,527.0 578.5,527.0 581.1,527.0 583.7,527.0 586.4,527.0 589.0,527.0 591.6,527.0 594.2,527.0 596.8,527.0 599.5,527.0 602.1,527.0 604.7,527.0 607.3,527.0 610.0,527.0 612.6,527.0 615.2,527.0 617.8,527.0 620.4,527.0 623.1,527.0 625.7,527.0 628.3,527.0 630.9,527.0 633.5,527.0 636.2,527.0 638.8,527.0 641.4,527.0 644.0,527.0 646.7,527.0 649.3,527.0 651.9,527.0 654.5,527.0 657.1,527.0 659.8,527.0 662.4,527.0 665.0,527.0 667.6,527.0 670.2,527.0 672.9,527.0 675.5,527.0 678.1,527.0 680.7,527.0 683.4,527.0 686.0,527.0 688.6,527.0 691.2,527.0 693.8,527.0 696.5,527.0 699.1,527.0 701.7,527.0 704.3,527.0 706.9,527.0 709.6,527.0 712.2,527.0 714.8,527.0 717.4,527.0 720.1,527.0 722.7,527.0 725.3,527.0 727.9,527.0 730.5,527.0 733.2,527.0 735.8,527.0 738.4,527.0 741.0,527.0 743.6,527.0 746.3,527.0 748.9,527.0 751.5,527.0 754.1,527.0 756.8,527.0 759.4,527.0 762.0,527.0" fill="none" stroke="#a94fff" stroke-width="2.0" stroke-linejoin="round" stroke-linecap="round"/>
<text x="21.3" y="538.9" class="ax" textLength="23.4" lengthAdjust="spacingAndGlyphs">12:00</text><text x="147.2" y="538.9" class="ax" textLength="23.4" lengthAdjust="spacingAndGlyphs">16:00</text><text x="273.1" y="538.9" class="ax" textLength="23.4" lengthAdjust="spacingAndGlyphs">20:00</text><text x="399.0" y="538.9" class="ax" textLength="23.4" lengthAdjust="spacingAndGlyphs">Nov 7</text><text x="527.3" y="538.9" class="ax" textLength="18.6" lengthAdjust="spacingAndGlyphs">4:00</text><text x="653.2" y="538.9" class="ax" textLength="18.6" lengthAdjust="spacingAndGlyphs">8:00</text>
<line x1="819.5" x2="1575.0" y1="381.6" y2="381.6" stroke="#353535" stroke-width="1.3"/><line x1="819.5" x2="1575.0" y1="405.8" y2="405.8" stroke="#353535" stroke-width="1.3"/><line x1="819.5" x2="1575.0" y1="430.0" y2="430.0" stroke="#353535" stroke-width="1.3"/><line x1="819.5" x2="1575.0" y1="454.2" y2="454.2" stroke="#353535" stroke-width="1.3"/><line x1="819.5" x2="1575.0" y1="478.4" y2="478.4" stroke="#353535" stroke-width="1.3"/><line x1="819.5" x2="1575.0" y1="502.6" y2="502.6" stroke="#353535" stroke-width="1.3"/><line x1="819.5" x2="1575.0" y1="526.8" y2="526.8" stroke="#353535" stroke-width="1.3"/>
<polyline points="819.5,450.3 822.1,488.5 824.7,526.8 827.4,501.3 830.0,501.3 832.6,526.8 835.2,526.8 837.9,526.8 840.5,501.3 843.1,526.8 845.7,501.3 848.4,526.8 851.0,488.5 853.6,450.3 856.2,501.3 858.8,475.8 861.5,526.8 864.1,501.3 866.7,501.3 869.3,475.8 872.0,475.8 874.6,475.8 877.2,475.8 879.8,526.8 882.5,526.8 885.1,501.3 887.7,501.3 890.3,501.3 893.0,475.8 895.6,501.3 898.2,526.8 900.8,450.3 903.4,501.3 906.1,501.3 908.7,501.3 911.3,475.8 913.9,501.3 916.6,463.0 919.2,424.8 921.8,501.3 924.4,450.3 927.1,488.5 929.7,526.8 932.3,501.3 934.9,475.8 937.5,475.8 940.2,450.3 942.8,526.8 945.4,475.8 948.0,526.8 950.7,501.3 953.3,501.3 955.9,501.3 958.5,501.3 961.2,475.8 963.8,501.3 966.4,526.8 969.0,501.3 971.6,501.3 974.3,501.3 976.9,526.8 979.5,501.3 982.1,501.3 984.8,526.8 987.4,450.3 990.0,475.8 992.6,450.3 995.3,501.3 997.9,501.3 1000.5,501.3 1003.1,526.8 1005.8,501.3 1008.4,501.3 1011.0,501.3 1013.6,475.8 1016.2,526.8 1018.9,526.8 1021.5,501.3 1024.1,526.8 1026.7,501.3 1029.4,526.8 1032.0,501.3 1034.6,501.3 1037.2,526.8 1039.9,501.3 1042.5,526.8 1045.1,501.3 1047.7,501.3 1050.3,526.8 1053.0,488.5 1055.6,450.3 1058.2,501.3 1060.8,501.3 1063.5,501.3 1066.1,526.8 1068.7,501.3 1071.3,501.3 1074.0,526.8 1076.6,501.3 1079.2,475.8 1081.8,501.3 1084.4,501.3 1087.1,501.3 1089.7,450.3 1092.3,526.8 1094.9,501.3 1097.6,475.8 1100.2,501.3 1102.8,501.3 1105.4,501.3 1108.1,450.3 1110.7,496.2 1113.3,501.3 1115.9,501.3 1118.6,526.8 1121.2,501.3 1123.8,475.8 1126.4,526.8 1129.0,475.8 1131.7,475.8 1134.3,475.8 1136.9,498.7 1139.5,496.2 1142.2,503.8 1144.8,526.8 1147.4,450.3 1150.0,526.8 1152.7,501.3 1155.3,475.8 1157.9,526.8 1160.5,501.3 1163.1,526.8 1165.8,501.3 1168.4,501.3 1171.0,475.8 1173.6,501.3 1176.3,450.3 1178.9,475.8 1181.5,501.3 1184.1,450.3 1186.8,501.3 1189.4,475.8 1192.0,501.3 1194.6,526.8 1197.2,526.8 1199.9,501.3 1202.5,501.3 1205.1,526.8 1207.7,526.8 1210.4,488.5 1213.0,450.3 1215.6,501.3 1218.2,501.3 1220.9,475.8 1223.5,475.8 1226.1,526.8 1228.7,501.3 1231.4,475.8 1234.0,526.8 1236.6,450.3 1239.2,501.3 1241.8,501.3 1244.5,501.3 1247.1,501.3 1249.7,475.8 1252.3,526.8 1255.0,526.8 1257.6,450.3 1260.2,526.8 1262.8,475.8 1265.5,475.8 1268.1,501.3 1270.7,501.3 1273.3,501.3 1275.9,475.8 1278.6,475.8 1281.2,475.8 1283.8,475.8 1286.4,526.8 1289.1,501.3 1291.7,501.3 1294.3,501.3 1296.9,475.8 1299.6,501.3 1302.2,526.8 1304.8,501.3 1307.4,475.8 1310.1,526.8 1312.7,501.3 1315.3,501.3 1317.9,501.3 1320.5,501.3 1323.2,475.8 1325.8,450.3 1328.4,526.8 1331.0,488.5 1333.7,450.3 1336.3,475.8 1338.9,501.3 1341.5,501.3 1344.2,475.8 1346.8,475.8 1349.4,475.8 1352.0,501.3 1354.6,450.3 1357.3,526.8 1359.9,526.8 1362.5,526.8 1365.1,526.8 1367.8,475.8 1370.4,501.3 1373.0,501.3 1375.6,501.3 1378.3,475.8 1380.9,501.3 1383.5,475.8 1386.1,506.4 1388.7,526.8 1391.4,501.3 1394.0,501.3 1396.6,501.3 1399.2,475.8 1401.9,475.8 1404.5,501.3 1407.1,475.8 1409.7,475.8 1412.4,501.3 1415.0,501.3 1417.6,475.8 1420.2,526.8 1422.9,526.8 1425.5,450.3 1428.1,501.3 1430.7,450.3 1433.3,488.5 1436.0,526.8 1438.6,501.3 1441.2,501.3 1443.8,501.3 1446.5,475.8 1449.1,501.3 1451.7,501.3 1454.3,501.3 1457.0,475.8 1459.6,501.3 1462.2,526.8 1464.8,501.3 1467.4,501.3 1470.1,526.8 1472.7,475.8 1475.3,501.3 1477.9,501.3 1480.6,501.3 1483.2,501.3 1485.8,526.8 1488.4,501.3 1491.1,501.3 1493.7,501.3 1496.3,526.8 1498.9,526.8 1501.5,526.8 1504.2,526.8 1506.8,501.3 1509.4,526.8 1512.0,475.8 1514.7,475.8 1517.3,501.3 1519.9,501.3 1522.5,501.3 1525.2,526.8 1527.8,501.3 1530.4,475.8 1533.0,450.3 1535.7,488.5 1538.3,526.8 1540.9,475.8 1543.5,526.8 1546.1,526.8 1548.8,422.2 1551.4,526.8 1554.0,475.8 1556.6,450.3 1559.3,475.8 1561.9,501.3 1564.5,475.8 1567.1,526.8 1569.8,475.8 1572.4,501.3 1575.0,463.0" fill="none" stroke="#f5508f" stroke-width="1.7" stroke-linejoin="round" stroke-linecap="round"/>
<polyline points="819.5,521.0 822.1,524.8 824.7,521.0 827.4,524.0 830.0,511.3 832.6,526.3 835.2,526.3 837.9,524.0 840.5,512.8 843.1,511.3 845.7,521.0 848.4,518.8 851.0,524.0 853.6,512.8 856.2,515.0 858.8,524.0 861.5,503.8 864.1,524.8 866.7,520.3 869.3,518.8 872.0,524.8 874.6,504.5 877.2,515.8 879.8,518.8 882.5,525.5 885.1,519.5 887.7,513.5 890.3,511.3 893.0,511.3 895.6,516.5 898.2,518.0 900.8,511.3 903.4,517.3 906.1,523.3 908.7,526.3 911.3,517.3 913.9,505.3 916.6,503.8 919.2,518.8 921.8,526.3 924.4,512.8 927.1,518.0 929.7,515.8 932.3,511.3 934.9,524.0 937.5,513.5 940.2,512.0 942.8,518.8 945.4,518.8 948.0,518.8 950.7,509.8 953.3,503.8 955.9,524.0 958.5,526.3 961.2,524.0 963.8,520.3 966.4,526.3 969.0,516.5 971.6,511.3 974.3,518.8 976.9,517.3 979.5,511.3 982.1,524.0 984.8,517.3 987.4,512.0 990.0,515.0 992.6,511.3 995.3,513.5 997.9,518.8 1000.5,518.8 1003.1,514.3 1005.8,511.3 1008.4,524.0 1011.0,518.8 1013.6,516.5 1016.2,509.8 1018.9,503.8 1021.5,517.3 1024.1,518.8 1026.7,518.8 1029.4,503.8 1032.0,515.0 1034.6,524.8 1037.2,518.8 1039.9,505.3 1042.5,496.3 1045.1,509.0 1047.7,518.8 1050.3,526.3 1053.0,519.5 1055.6,519.5 1058.2,526.3 1060.8,520.3 1063.5,526.3 1066.1,513.5 1068.7,503.8 1071.3,512.8 1074.0,512.0 1076.6,522.5 1079.2,503.8 1081.8,522.5 1084.4,503.8 1087.1,524.0 1089.7,511.3 1092.3,512.8 1094.9,524.0 1097.6,526.3 1100.2,516.5 1102.8,511.3 1105.4,526.3 1108.1,503.8 1110.7,526.3 1113.3,520.3 1115.9,518.0 1118.6,511.3 1121.2,518.0 1123.8,518.8 1126.4,518.8 1129.0,518.8 1131.7,519.5 1134.3,524.8 1136.9,515.0 1139.5,507.5 1142.2,521.0 1144.8,511.3 1147.4,517.3 1150.0,518.8 1152.7,518.8 1155.3,524.8 1157.9,511.3 1160.5,517.3 1163.1,518.8 1165.8,510.5 1168.4,510.5 1171.0,517.3 1173.6,526.3 1176.3,519.5 1178.9,518.0 1181.5,510.5 1184.1,510.5 1186.8,517.3 1189.4,518.8 1192.0,519.5 1194.6,526.3 1197.2,512.8 1199.9,517.3 1202.5,511.3 1205.1,511.3 1207.7,517.3 1210.4,511.3 1213.0,511.3 1215.6,518.0 1218.2,518.8 1220.9,519.5 1223.5,525.5 1226.1,518.8 1228.7,518.0 1231.4,511.3 1234.0,524.8 1236.6,503.8 1239.2,517.3 1241.8,518.8 1244.5,518.8 1247.1,518.8 1249.7,511.3 1252.3,526.3 1255.0,511.3 1257.6,518.8 1260.2,518.8 1262.8,518.8 1265.5,511.3 1268.1,503.8 1270.7,524.0 1273.3,515.0 1275.9,503.8 1278.6,518.8 1281.2,518.8 1283.8,518.8 1286.4,518.8 1289.1,503.8 1291.7,518.8 1294.3,511.3 1296.9,503.8 1299.6,518.8 1302.2,526.3 1304.8,511.3 1307.4,518.8 1310.1,504.5 1312.7,518.8 1315.3,511.3 1317.9,509.8 1320.5,496.3 1323.2,515.0 1325.8,526.3 1328.4,511.3 1331.0,518.8 1333.7,526.3 1336.3,511.3 1338.9,503.8 1341.5,503.8 1344.2,510.5 1346.8,503.8 1349.4,524.0 1352.0,513.5 1354.6,526.3 1357.3,526.3 1359.9,519.5 1362.5,518.8 1365.1,517.3 1367.8,511.3 1370.4,511.3 1373.0,511.3 1375.6,511.3 1378.3,518.8 1380.9,524.0 1383.5,526.3 1386.1,511.3 1388.7,518.8 1391.4,511.3 1394.0,518.8 1396.6,515.0 1399.2,503.8 1401.9,517.3 1404.5,511.3 1407.1,518.8 1409.7,524.8 1412.4,519.5 1415.0,518.8 1417.6,524.0 1420.2,511.3 1422.9,518.8 1425.5,518.8 1428.1,518.8 1430.7,511.3 1433.3,517.3 1436.0,526.3 1438.6,519.5 1441.2,518.8 1443.8,518.8 1446.5,518.0 1449.1,511.3 1451.7,518.0 1454.3,518.8 1457.0,518.8 1459.6,524.8 1462.2,526.3 1464.8,511.3 1467.4,503.8 1470.1,518.0 1472.7,518.8 1475.3,518.8 1477.9,518.8 1480.6,518.8 1483.2,518.8 1485.8,518.8 1488.4,518.8 1491.1,518.8 1493.7,526.3 1496.3,526.3 1498.9,526.3 1501.5,526.3 1504.2,524.0 1506.8,511.3 1509.4,518.8 1512.0,518.0 1514.7,511.3 1517.3,524.0 1519.9,518.8 1522.5,519.5 1525.2,526.3 1527.8,518.8 1530.4,511.3 1533.0,518.0 1535.7,526.3 1538.3,524.8 1540.9,515.0 1543.5,511.3 1546.1,526.3 1548.8,518.8 1551.4,524.0 1554.0,496.3 1556.6,517.3 1559.3,511.3 1561.9,516.5 1564.5,518.8 1567.1,511.3 1569.8,517.3 1572.4,526.3 1575.0,506.8" fill="none" stroke="#f5d20a" stroke-width="2.0" stroke-linejoin="round" stroke-linecap="round"/>
<polyline points="819.5,527.0 822.1,526.8 824.7,527.2 827.4,527.0 830.0,526.8 832.6,526.9 835.2,527.1 837.9,527.0 840.5,527.1 843.1,526.7 845.7,526.8 848.4,526.9 851.0,527.1 853.6,526.9 856.2,527.0 858.8,526.8 861.5,527.1 864.1,526.8 866.7,526.9 869.3,527.0 872.0,527.0 874.6,526.8 877.2,527.0 879.8,526.7 882.5,527.3 885.1,526.8 887.7,526.9 890.3,527.0 893.0,526.8 895.6,527.2 898.2,527.1 900.8,526.9 903.4,526.8 906.1,527.1 908.7,526.7 911.3,526.9 913.9,527.3 916.6,527.2 919.2,527.3 921.8,527.0 924.4,527.1 927.1,527.1 929.7,527.0 932.3,527.3 934.9,526.8 937.5,526.8 940.2,527.0 942.8,527.0 945.4,527.1 948.0,526.9 950.7,527.1 953.3,526.7 955.9,526.7 958.5,526.9 961.2,526.8 963.8,527.3 966.4,527.2 969.0,527.1 971.6,527.2 974.3,527.0 976.9,526.7 979.5,526.8 982.1,526.7 984.8,527.2 987.4,527.2 990.0,527.3 992.6,527.1 995.3,527.3 997.9,527.0 1000.5,527.1 1003.1,526.9 1005.8,527.0 1008.4,526.9 1011.0,527.1 1013.6,526.9 1016.2,526.9 1018.9,526.9 1021.5,527.0 1024.1,527.0 1026.7,527.1 1029.4,527.3 1032.0,527.0 1034.6,526.9 1037.2,527.2 1039.9,526.8 1042.5,526.8 1045.1,526.8 1047.7,526.8 1050.3,527.0 1053.0,527.2 1055.6,527.1 1058.2,526.9 1060.8,526.7 1063.5,527.2 1066.1,527.3 1068.7,527.1 1071.3,527.1 1074.0,526.9 1076.6,527.2 1079.2,526.8 1081.8,527.1 1084.4,526.8 1087.1,527.1 1089.7,527.1 1092.3,527.2 1094.9,526.7 1097.6,526.9 1100.2,526.8 1102.8,527.3 1105.4,527.0 1108.1,526.9 1110.7,526.7 1113.3,526.7 1115.9,527.2 1118.6,527.1 1121.2,526.7 1123.8,527.0 1126.4,526.7 1129.0,527.1 1131.7,527.3 1134.3,526.7 1136.9,527.1 1139.5,527.0 1142.2,527.1 1144.8,527.0 1147.4,526.7 1150.0,526.7 1152.7,526.8 1155.3,527.1 1157.9,526.8 1160.5,527.3 1163.1,527.1 1165.8,526.7 1168.4,527.1 1171.0,527.1 1173.6,527.0 1176.3,527.2 1178.9,526.9 1181.5,526.9 1184.1,527.2 1186.8,526.7 1189.4,527.3 1192.0,526.9 1194.6,527.1 1197.2,527.2 1199.9,527.3 1202.5,526.7 1205.1,526.8 1207.7,527.0 1210.4,526.8 1213.0,526.7 1215.6,526.7 1218.2,527.0 1220.9,527.1 1223.5,527.0 1226.1,526.7 1228.7,526.9 1231.4,526.9 1234.0,526.8 1236.6,527.1 1239.2,527.0 1241.8,526.8 1244.5,527.2 1247.1,526.8 1249.7,527.3 1252.3,527.0 1255.0,527.0 1257.6,527.2 1260.2,526.7 1262.8,527.0 1265.5,527.2 1268.1,527.1 1270.7,526.9 1273.3,527.0 1275.9,527.3 1278.6,527.2 1281.2,526.9 1283.8,527.2 1286.4,527.1 1289.1,526.8 1291.7,526.8 1294.3,526.8 1296.9,527.2 1299.6,527.3 1302.2,526.8 1304.8,526.9 1307.4,527.1 1310.1,527.3 1312.7,527.0 1315.3,527.2 1317.9,526.9 1320.5,526.7 1323.2,527.2 1325.8,527.3 1328.4,526.9 1331.0,527.2 1333.7,527.2 1336.3,527.0 1338.9,526.7 1341.5,527.1 1344.2,527.1 1346.8,527.0 1349.4,527.2 1352.0,527.1 1354.6,526.9 1357.3,527.1 1359.9,526.8 1362.5,527.2 1365.1,527.2 1367.8,526.9 1370.4,527.0 1373.0,526.7 1375.6,527.2 1378.3,526.9 1380.9,526.9 1383.5,527.1 1386.1,527.2 1388.7,526.9 1391.4,526.8 1394.0,527.0 1396.6,527.0 1399.2,526.9 1401.9,526.9 1404.5,527.0 1407.1,527.2 1409.7,527.0 1412.4,527.0 1415.0,526.8 1417.6,526.7 1420.2,527.0 1422.9,527.1 1425.5,527.2 1428.1,526.9 1430.7,526.9 1433.3,527.2 1436.0,526.9 1438.6,526.7 1441.2,527.1 1443.8,526.7 1446.5,527.0 1449.1,526.9 1451.7,526.8 1454.3,527.2 1457.0,527.1 1459.6,526.7 1462.2,527.3 1464.8,527.1 1467.4,527.0 1470.1,526.9 1472.7,526.9 1475.3,526.7 1477.9,526.9 1480.6,527.3 1483.2,527.3 1485.8,527.3 1488.4,527.0 1491.1,527.3 1493.7,527.0 1496.3,526.9 1498.9,527.2 1501.5,526.8 1504.2,527.1 1506.8,526.7 1509.4,527.1 1512.0,526.9 1514.7,527.0 1517.3,527.1 1519.9,526.8 1522.5,527.3 1525.2,527.2 1527.8,527.1 1530.4,526.8 1533.0,527.0 1535.7,527.3 1538.3,527.1 1540.9,526.9 1543.5,526.8 1546.1,527.2 1548.8,526.8 1551.4,527.1 1554.0,527.0 1556.6,527.0 1559.3,527.0 1561.9,526.7 1564.5,526.7 1567.1,526.7 1569.8,526.9 1572.4,526.9 1575.0,527.2" fill="none" stroke="#0e6a2e" stroke-width="1.5" stroke-linejoin="round" stroke-linecap="round"/>
<polyline points="819.5,526.5 822.1,526.7 824.7,526.7 827.4,526.7 830.0,526.7 832.6,526.1 835.2,527.0 837.9,527.1 840.5,526.4 843.1,526.7 845.7,526.7 848.4,526.5 851.0,526.7 853.6,526.9 856.2,527.1 858.8,526.2 861.5,526.2 864.1,526.8 866.7,526.6 869.3,526.8 872.0,527.0 874.6,526.2 877.2,526.3 879.8,526.9 882.5,526.8 885.1,526.4 887.7,526.3 890.3,526.6 893.0,526.7 895.6,526.9 898.2,526.3 900.8,526.2 903.4,526.2 906.1,527.0 908.7,526.5 911.3,526.1 913.9,526.4 916.6,526.6 919.2,527.0 921.8,527.0 924.4,526.4 927.1,527.0 929.7,526.3 932.3,526.4 934.9,526.6 937.5,526.2 940.2,526.2 942.8,526.5 945.4,527.0 948.0,526.5 950.7,526.7 953.3,526.9 955.9,526.2 958.5,526.4 961.2,527.0 963.8,526.9 966.4,526.8 969.0,526.5 971.6,526.8 974.3,526.7 976.9,526.3 979.5,526.9 982.1,526.4 984.8,526.8 987.4,526.2 990.0,526.1 992.6,526.8 995.3,526.5 997.9,527.0 1000.5,526.7 1003.1,526.5 1005.8,526.5 1008.4,526.8 1011.0,527.1 1013.6,527.0 1016.2,526.5 1018.9,526.9 1021.5,526.8 1024.1,526.5 1026.7,526.2 1029.4,526.6 1032.0,526.8 1034.6,526.5 1037.2,526.8 1039.9,526.3 1042.5,526.9 1045.1,526.8 1047.7,526.7 1050.3,526.2 1053.0,526.9 1055.6,526.9 1058.2,527.0 1060.8,526.9 1063.5,526.8 1066.1,526.7 1068.7,526.3 1071.3,526.7 1074.0,526.6 1076.6,526.7 1079.2,526.3 1081.8,526.2 1084.4,526.7 1087.1,526.2 1089.7,526.8 1092.3,526.1 1094.9,526.6 1097.6,526.4 1100.2,526.7 1102.8,526.8 1105.4,527.0 1108.1,526.2 1110.7,526.7 1113.3,526.4 1115.9,526.6 1118.6,526.6 1121.2,526.9 1123.8,526.9 1126.4,526.8 1129.0,526.4 1131.7,526.6 1134.3,527.1 1136.9,526.4 1139.5,526.7 1142.2,527.0 1144.8,526.8 1147.4,526.9 1150.0,526.3 1152.7,526.5 1155.3,526.8 1157.9,526.9 1160.5,526.8 1163.1,526.8 1165.8,526.8 1168.4,526.3 1171.0,526.3 1173.6,526.4 1176.3,526.2 1178.9,526.4 1181.5,527.0 1184.1,527.1 1186.8,526.9 1189.4,526.8 1192.0,526.6 1194.6,526.3 1197.2,526.5 1199.9,526.7 1202.5,526.9 1205.1,526.1 1207.7,526.3 1210.4,526.8 1213.0,527.1 1215.6,526.1 1218.2,526.8 1220.9,526.3 1223.5,527.0 1226.1,526.4 1228.7,526.7 1231.4,526.2 1234.0,526.8 1236.6,527.0 1239.2,526.9 1241.8,526.3 1244.5,526.1 1247.1,526.5 1249.7,526.4 1252.3,526.8 1255.0,526.8 1257.6,527.0 1260.2,526.1 1262.8,527.1 1265.5,526.5 1268.1,526.8 1270.7,526.9 1273.3,526.7 1275.9,526.2 1278.6,526.9 1281.2,526.9 1283.8,526.5 1286.4,526.4 1289.1,526.6 1291.7,526.9 1294.3,526.2 1296.9,527.0 1299.6,526.9 1302.2,526.9 1304.8,526.6 1307.4,526.6 1310.1,526.5 1312.7,526.4 1315.3,526.2 1317.9,526.6 1320.5,527.1 1323.2,526.3 1325.8,527.1 1328.4,526.8 1331.0,527.0 1333.7,526.5 1336.3,526.3 1338.9,527.0 1341.5,526.8 1344.2,526.2 1346.8,526.4 1349.4,527.0 1352.0,526.4 1354.6,526.3 1357.3,526.7 1359.9,526.9 1362.5,526.4 1365.1,526.8 1367.8,527.0 1370.4,526.9 1373.0,526.7 1375.6,527.0 1378.3,526.7 1380.9,526.5 1383.5,526.5 1386.1,526.7 1388.7,526.3 1391.4,527.0 1394.0,526.8 1396.6,526.2 1399.2,526.2 1401.9,526.2 1404.5,526.3 1407.1,526.6 1409.7,526.3 1412.4,526.5 1415.0,527.0 1417.6,526.8 1420.2,527.0 1422.9,526.2 1425.5,526.8 1428.1,526.7 1430.7,526.6 1433.3,527.0 1436.0,526.4 1438.6,526.3 1441.2,526.3 1443.8,526.2 1446.5,526.8 1449.1,527.0 1451.7,526.3 1454.3,526.4 1457.0,526.7 1459.6,526.8 1462.2,526.9 1464.8,526.3 1467.4,526.6 1470.1,526.3 1472.7,526.8 1475.3,526.8 1477.9,526.6 1480.6,526.4 1483.2,526.2 1485.8,526.7 1488.4,526.4 1491.1,526.7 1493.7,526.2 1496.3,526.3 1498.9,526.5 1501.5,526.7 1504.2,526.8 1506.8,526.2 1509.4,526.3 1512.0,526.8 1514.7,527.0 1517.3,526.9 1519.9,526.1 1522.5,527.1 1525.2,526.3 1527.8,526.6 1530.4,526.5 1533.0,526.6 1535.7,526.7 1538.3,526.5 1540.9,527.0 1543.5,526.2 1546.1,527.0 1548.8,527.0 1551.4,526.4 1554.0,526.5 1556.6,526.3 1559.3,526.4 1561.9,526.2 1564.5,527.0 1567.1,527.1 1569.8,526.9 1572.4,526.3 1575.0,526.9" fill="none" stroke="#ff9f55" stroke-width="1.5" stroke-linejoin="round" stroke-linecap="round"/>
<polyline points="819.5,525.5 822.1,526.0 824.7,525.7 827.4,526.1 830.0,525.6 832.6,525.8 835.2,525.7 837.9,526.1 840.5,525.9 843.1,526.4 845.7,525.3 848.4,525.7 851.0,525.9 853.6,525.8 856.2,526.5 858.8,526.2 861.5,526.3 864.1,525.5 866.7,526.6 869.3,526.0 872.0,525.5 874.6,525.6 877.2,525.7 879.8,526.2 882.5,526.3 885.1,525.7 887.7,526.2 890.3,525.7 893.0,526.1 895.6,525.6 898.2,525.9 900.8,525.5 903.4,525.3 906.1,526.1 908.7,525.3 911.3,526.6 913.9,525.5 916.6,526.6 919.2,525.9 921.8,526.1 924.4,525.6 927.1,526.2 929.7,526.3 932.3,525.6 934.9,525.9 937.5,525.6 940.2,526.0 942.8,526.6 945.4,525.6 948.0,526.3 950.7,526.0 953.3,526.6 955.9,526.3 958.5,525.7 961.2,525.6 963.8,525.8 966.4,526.0 969.0,525.6 971.6,525.7 974.3,526.3 976.9,525.9 979.5,525.8 982.1,525.7 984.8,526.3 987.4,526.2 990.0,526.2 992.6,526.5 995.3,526.1 997.9,525.7 1000.5,525.8 1003.1,526.4 1005.8,525.6 1008.4,526.4 1011.0,525.6 1013.6,526.4 1016.2,526.5 1018.9,526.3 1021.5,525.9 1024.1,526.2 1026.7,525.5 1029.4,525.4 1032.0,526.2 1034.6,525.6 1037.2,525.7 1039.9,525.9 1042.5,526.3 1045.1,525.4 1047.7,525.4 1050.3,526.6 1053.0,526.2 1055.6,526.2 1058.2,526.3 1060.8,526.0 1063.5,525.4 1066.1,526.6 1068.7,525.5 1071.3,526.2 1074.0,526.6 1076.6,525.4 1079.2,526.2 1081.8,526.3 1084.4,526.4 1087.1,526.1 1089.7,526.4 1092.3,526.4 1094.9,526.3 1097.6,525.8 1100.2,526.0 1102.8,526.2 1105.4,525.9 1108.1,525.6 1110.7,525.7 1113.3,526.2 1115.9,525.4 1118.6,525.6 1121.2,525.9 1123.8,526.0 1126.4,526.2 1129.0,526.4 1131.7,525.4 1134.3,525.8 1136.9,526.5 1139.5,525.4 1142.2,525.4 1144.8,526.6 1147.4,525.7 1150.0,526.3 1152.7,525.9 1155.3,525.5 1157.9,526.1 1160.5,526.0 1163.1,525.7 1165.8,526.3 1168.4,525.8 1171.0,526.0 1173.6,525.3 1176.3,526.4 1178.9,525.7 1181.5,526.5 1184.1,526.2 1186.8,526.4 1189.4,526.4 1192.0,525.9 1194.6,526.4 1197.2,525.6 1199.9,526.5 1202.5,525.8 1205.1,525.5 1207.7,526.4 1210.4,526.3 1213.0,525.6 1215.6,526.0 1218.2,525.4 1220.9,526.2 1223.5,526.1 1226.1,525.4 1228.7,526.2 1231.4,525.3 1234.0,525.4 1236.6,526.3 1239.2,525.9 1241.8,525.4 1244.5,526.4 1247.1,525.5 1249.7,525.6 1252.3,525.6 1255.0,525.8 1257.6,526.5 1260.2,525.4 1262.8,526.5 1265.5,525.6 1268.1,525.7 1270.7,526.2 1273.3,525.7 1275.9,526.1 1278.6,525.6 1281.2,526.5 1283.8,525.4 1286.4,526.1 1289.1,525.6 1291.7,526.0 1294.3,525.5 1296.9,526.2 1299.6,525.9 1302.2,526.6 1304.8,526.0 1307.4,526.5 1310.1,525.5 1312.7,525.7 1315.3,526.0 1317.9,525.3 1320.5,525.4 1323.2,525.4 1325.8,526.5 1328.4,525.7 1331.0,525.7 1333.7,525.8 1336.3,526.6 1338.9,525.4 1341.5,526.0 1344.2,525.8 1346.8,525.5 1349.4,526.2 1352.0,526.6 1354.6,525.4 1357.3,526.2 1359.9,526.5 1362.5,526.4 1365.1,525.3 1367.8,525.6 1370.4,526.3 1373.0,526.4 1375.6,525.4 1378.3,525.7 1380.9,525.8 1383.5,526.4 1386.1,526.1 1388.7,525.4 1391.4,526.6 1394.0,526.1 1396.6,526.5 1399.2,525.3 1401.9,526.5 1404.5,525.4 1407.1,525.5 1409.7,525.6 1412.4,526.5 1415.0,525.7 1417.6,526.0 1420.2,526.0 1422.9,526.4 1425.5,525.9 1428.1,525.6 1430.7,526.4 1433.3,525.5 1436.0,526.1 1438.6,526.3 1441.2,526.3 1443.8,526.0 1446.5,525.8 1449.1,525.9 1451.7,525.4 1454.3,525.9 1457.0,525.9 1459.6,525.3 1462.2,526.3 1464.8,526.6 1467.4,526.2 1470.1,526.2 1472.7,526.4 1475.3,526.1 1477.9,526.6 1480.6,525.4 1483.2,526.0 1485.8,525.5 1488.4,525.7 1491.1,525.7 1493.7,525.6 1496.3,526.2 1498.9,525.7 1501.5,526.3 1504.2,525.9 1506.8,525.8 1509.4,525.6 1512.0,526.4 1514.7,526.2 1517.3,525.5 1519.9,525.6 1522.5,525.3 1525.2,526.4 1527.8,526.3 1530.4,526.5 1533.0,525.7 1535.7,525.6 1538.3,525.8 1540.9,525.6 1543.5,525.9 1546.1,525.9 1548.8,525.4 1551.4,525.8 1554.0,525.7 1556.6,525.8 1559.3,526.0 1561.9,525.6 1564.5,525.9 1567.1,526.4 1569.8,526.0 1572.4,526.1 1575.0,526.0" fill="none" stroke="#a94fff" stroke-width="1.9" stroke-linejoin="round" stroke-linecap="round"/>
<text x="834.6" y="538.9" class="ax" textLength="23.4" lengthAdjust="spacingAndGlyphs">12:00</text><text x="960.2" y="538.9" class="ax" textLength="23.4" lengthAdjust="spacingAndGlyphs">16:00</text><text x="1085.9" y="538.9" class="ax" textLength="23.4" lengthAdjust="spacingAndGlyphs">20:00</text><text x="1211.5" y="538.9" class="ax" textLength="23.4" lengthAdjust="spacingAndGlyphs">Nov 7</text><text x="1339.6" y="538.9" class="ax" textLength="18.6" lengthAdjust="spacingAndGlyphs">4:00</text><text x="1465.2" y="538.9" class="ax" textLength="18.6" lengthAdjust="spacingAndGlyphs">8:00</text>
<text x="800.6" y="388.1" class="ax" textLength="13.8" lengthAdjust="spacingAndGlyphs">60T</text>
<text x="800.6" y="408.8" class="ax" textLength="13.8" lengthAdjust="spacingAndGlyphs">50T</text>
<text x="800.6" y="433.0" class="ax" textLength="13.8" lengthAdjust="spacingAndGlyphs">40T</text>
<text x="800.6" y="457.2" class="ax" textLength="13.8" lengthAdjust="spacingAndGlyphs">30T</text>
<text x="800.6" y="481.4" class="ax" textLength="13.8" lengthAdjust="spacingAndGlyphs">20T</text>
<text x="800.6" y="505.6" class="ax" textLength="13.8" lengthAdjust="spacingAndGlyphs">10T</text>
<text x="810.1" y="529.8" class="ax" textLength="4.3" lengthAdjust="spacingAndGlyphs">0</text></svg>
<div class="lg" style="left:-12.5px;top:321.5px"><span class="li" style="left:0.0px"><i style="background:#0f62ab"></i>ip-10-0-0-227.us...</span><span class="li" style="left:83.9px;letter-spacing:-0.11px"><i style="background:#f74f97"></i>ip-10-0-1-116.us-...</span><span class="li" style="left:167.8px"><i style="background:#f0c80c"></i>ip-10-0-0-162.us...</span><span class="li" style="left:251.7px;letter-spacing:-0.11px"><i style="background:#0b5424"></i>ip-10-0-1-167.us-...</span><span class="li" style="left:335.6px"><i style="background:#ff9c4f"></i>ip-10-0-0-232.u...</span><span class="li" style="left:419.5px;letter-spacing:-0.11px"><i style="background:#a64dff"></i>ip-10-0-1-231.us...</span></div><div class="lg" style="left:800.5px;top:321.5px"><span class="li" style="left:0.0px"><i style="background:#0f62ab"></i>ip-10-0-0-227.us...</span><span class="li" style="left:83.9px;letter-spacing:-0.11px"><i style="background:#f74f97"></i>ip-10-0-1-116.us-...</span><span class="li" style="left:167.8px"><i style="background:#f0c80c"></i>ip-10-0-0-162.us...</span><span class="li" style="left:251.7px;letter-spacing:-0.11px"><i style="background:#0b5424"></i>ip-10-0-1-167.us-...</span><span class="li" style="left:335.6px"><i style="background:#ff9c4f"></i>ip-10-0-0-232.u...</span><span class="li" style="left:419.5px;letter-spacing:-0.11px"><i style="background:#a64dff"></i>ip-10-0-1-231.us...</span></div><div class="lg" style="left:-12.5px;top:552.0px"><span class="li" style="left:0.0px"><i style="background:#0f62ab"></i>ip-10-0-0-227.us...</span><span class="li" style="left:83.9px;letter-spacing:-0.11px"><i style="background:#f74f97"></i>ip-10-0-1-116.us-...</span><span class="li" style="left:167.8px"><i style="background:#f0c80c"></i>ip-10-0-0-162.us...</span><span class="li" style="left:251.7px;letter-spacing:-0.11px"><i style="background:#0b5424"></i>ip-10-0-1-167.us-...</span><span class="li" style="left:335.6px"><i style="background:#ff9c4f"></i>ip-10-0-0-232.u...</span><span class="li" style="left:419.5px;letter-spacing:-0.11px"><i style="background:#a64dff"></i>ip-10-0-1-231.us...</span></div><div class="lg" style="left:800.5px;top:552.0px"><span class="li" style="left:0.0px"><i style="background:#0f62ab"></i>ip-10-0-0-227.us...</span><span class="li" style="left:83.9px;letter-spacing:-0.11px"><i style="background:#f74f97"></i>ip-10-0-1-116.us-...</span><span class="li" style="left:167.8px"><i style="background:#f0c80c"></i>ip-10-0-0-162.us...</span><span class="li" style="left:251.7px;letter-spacing:-0.11px"><i style="background:#0b5424"></i>ip-10-0-1-167.us-...</span><span class="li" style="left:335.6px"><i style="background:#ff9c4f"></i>ip-10-0-0-232.u...</span><span class="li" style="left:419.5px;letter-spacing:-0.11px"><i style="background:#a64dff"></i>ip-10-0-1-231.us...</span></div>
<div class="tip"><div class="abs" style="left:11px;top:10.2px;font-size:10.9px;line-height:14px;font-weight:bold;color:#f4f4f4;">Nov 07, 9:45:00 AM</div><div class="tr" style="top:31.3px"><i style="background:#f0c80c"></i><span class="tn" style="letter-spacing:0.060px">ip-10-0-0-162.us-west-2.compute.internal</span><span class="tv">5.84B</span></div><div class="tr" style="top:50.2px"><i style="background:#f74f97"></i><span class="tn" style="letter-spacing:-0.045px">ip-10-0-1-116.us-west-2.compute.internal</span><span class="tv">5.46B</span></div><div class="tr" style="top:69.0px"><i style="background:#ff9c4f"></i><span class="tn" style="letter-spacing:0.100px">ip-10-0-0-232.us-west-2.compute.internal</span><span class="tv">3.54B</span></div><div class="tr" style="top:87.9px"><i style="background:#a64dff"></i><span class="tn" style="letter-spacing:0.000px">ip-10-0-1-231.us-west-2.compute.internal</span><span class="tv">3.21B</span></div><div class="tr" style="top:106.7px"><i style="background:#0b5424"></i><span class="tn" style="letter-spacing:-0.030px">ip-10-0-1-167.us-west-2.compute.internal</span><span class="tv">3.17B</span></div><div class="tr" style="top:125.5px"><i style="background:#0f62ab"></i><span class="tn" style="letter-spacing:0.060px">ip-10-0-0-227.us-west-2.compute.internal</span><span class="tv">2.63B</span></div></div>
</div>
</body></html>
